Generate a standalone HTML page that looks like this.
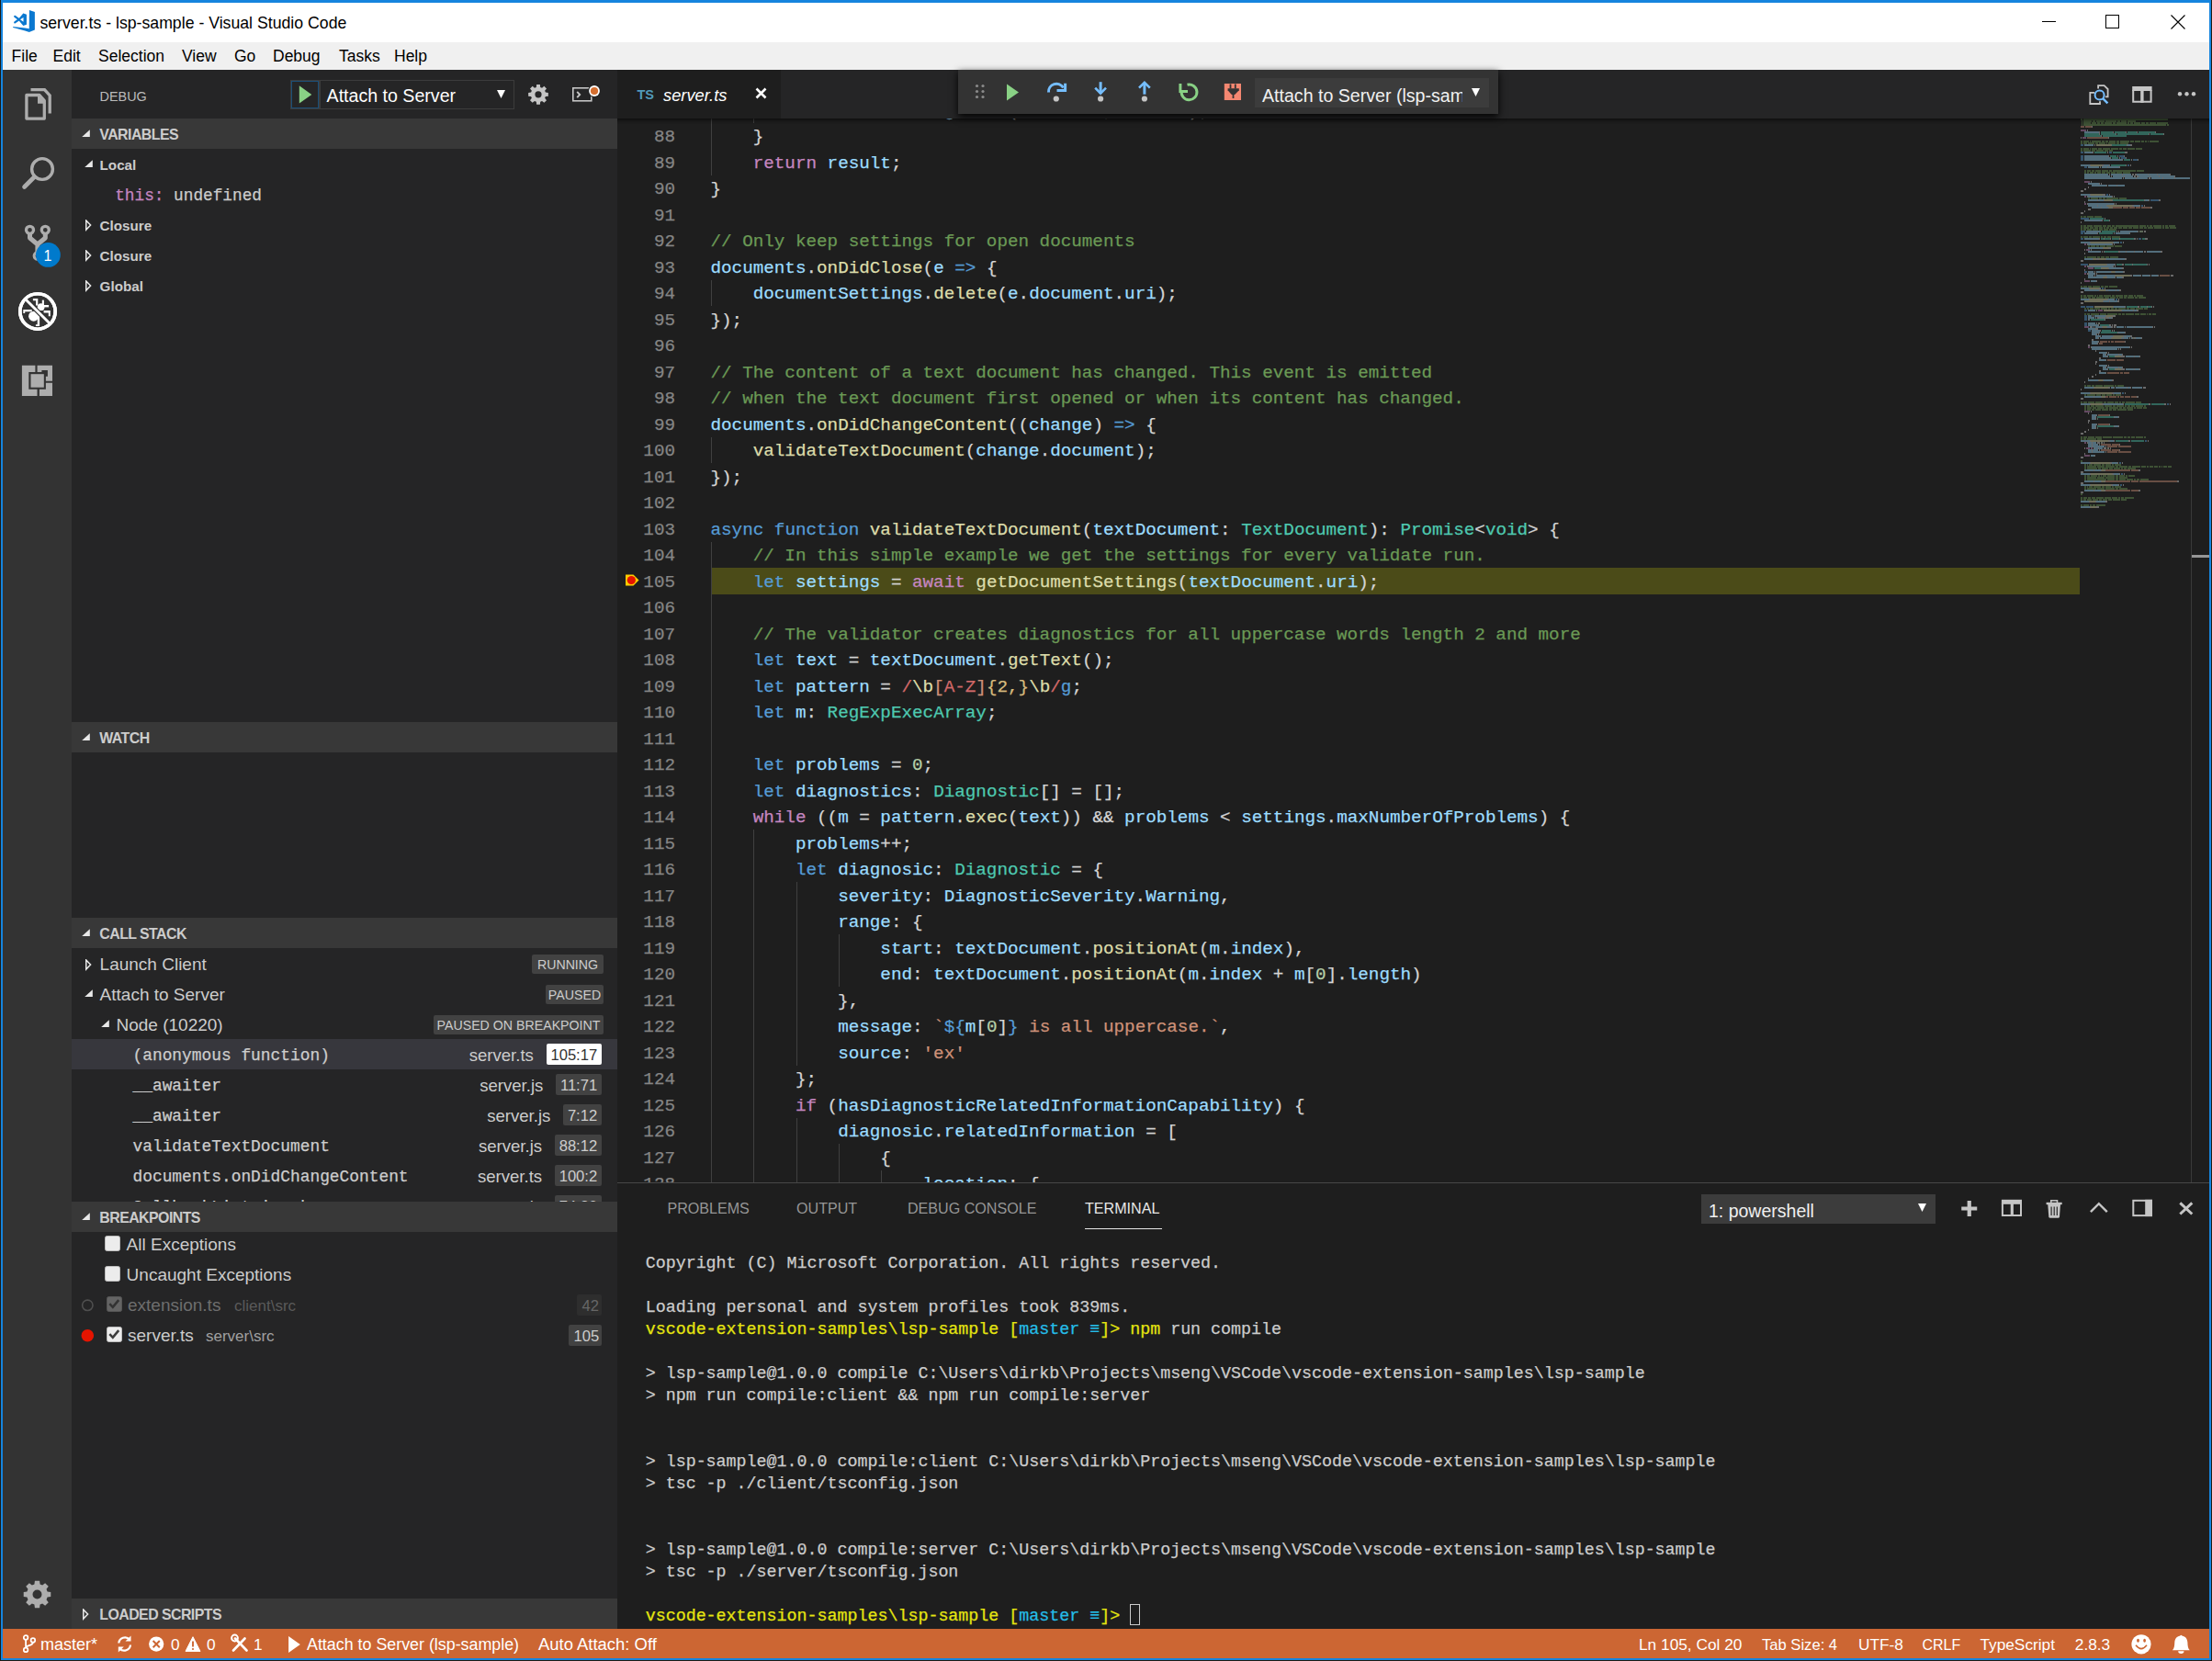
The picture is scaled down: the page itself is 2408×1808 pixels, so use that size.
<!DOCTYPE html><html><head><meta charset="utf-8"><style>
*{box-sizing:border-box}
html,body{margin:0;padding:0}
body{width:2408px;height:1808px;overflow:hidden;background:#1f1c15;position:relative;font-family:"Liberation Sans", sans-serif}
.t{position:absolute;white-space:pre}
.r{position:absolute}
.abs{position:absolute}
.clip{position:absolute;overflow:hidden}
.p{color:#d4d4d4}.kw{color:#569cd6}.ctl{color:#c586c0}.var{color:#9cdcfe}.fn{color:#dcdcaa}.ty{color:#4ec9b0}
.cm{color:#6a9955}.st{color:#ce9178}.num{color:#b5cea8}.re{color:#d16969}.rq{color:#d7ba7d}
.tw{color:#cccccc}.tyl{color:#e5e510}.tcy{color:#25bde8}
</style></head><body><div class="r" style="left:1.00px;top:0.00px;width:2406.00px;height:1807.00px;background:#1584de;"></div>
<div class="r" style="left:3.00px;top:3.00px;width:2402.00px;height:1802.00px;background:#1e1e1e;"></div>
<div class="r" style="left:3.00px;top:3.00px;width:2402.00px;height:43.00px;background:#ffffff;"></div>
<div class="t" style="left:43.40px;top:7.87px;line-height:35px;font-size:17.70px;color:#000;">server.ts - lsp-sample - Visual Studio Code</div>
<svg class="abs" style="left:0;top:0" width="45" height="45"><path fill="#0a78d0" d="M31.9 10.9 L37.9 13.05 V32.5 L31.7 34.9 Z"/><path fill="#0a78d0" d="M14.2 29 C20 29.4 26 30.4 31.9 31.2 V34.9 C26 33 19 30.9 14.2 29.9 Z"/><path d="M16.2 17.8 L21 21.3 M16.2 24.4 L21 21" stroke="#0a78d0" stroke-width="2.2" stroke-linecap="round"/><path fill="#0a78d0" fill-rule="evenodd" d="M25.3 14.4 L28.95 15.8 V26.8 L25.3 28 L19.6 21.3 Z M25.5 18.9 V23.8 L22 21.3 Z"/></svg>
<div class="r" style="left:2223.00px;top:23.00px;width:15.00px;height:1.00px;background:#000;"></div>
<div class="r" style="left:2292px;top:16px;width:15px;height:15px;border:1px solid #000"></div>
<svg class="abs" style="left:2363px;top:16px" width="16" height="16"><path d="M0.5 0.5L15.5 15.5M15.5 0.5L0.5 15.5" stroke="#000" stroke-width="1.1"/></svg>
<div class="r" style="left:3.00px;top:46.00px;width:2402.00px;height:30.00px;background:#f0f0f0;"></div>
<div class="t" style="left:12.60px;top:44.24px;line-height:35px;font-size:17.50px;color:#000;">File</div>
<div class="t" style="left:57.50px;top:44.24px;line-height:35px;font-size:17.50px;color:#000;">Edit</div>
<div class="t" style="left:107.00px;top:44.24px;line-height:35px;font-size:17.50px;color:#000;">Selection</div>
<div class="t" style="left:198.00px;top:44.24px;line-height:35px;font-size:17.50px;color:#000;">View</div>
<div class="t" style="left:255.00px;top:44.24px;line-height:35px;font-size:17.50px;color:#000;">Go</div>
<div class="t" style="left:297.00px;top:44.24px;line-height:35px;font-size:17.50px;color:#000;">Debug</div>
<div class="t" style="left:369.00px;top:44.24px;line-height:35px;font-size:17.50px;color:#000;">Tasks</div>
<div class="t" style="left:429.00px;top:44.24px;line-height:35px;font-size:17.50px;color:#000;">Help</div>
<div class="r" style="left:3.00px;top:76.00px;width:75.00px;height:1697.00px;background:#333333;"></div>
<svg class="abs" style="left:0;top:0" width="80" height="460"><path fill="none" stroke="#adadad" stroke-width="3.3" stroke-linejoin="round" d="M28.9 103.5 H43 L48.3 109.5 V129.1 H28.9 Z"/><path fill="#adadad" d="M41 103 V112.8 H50 Z"/><path fill="none" stroke="#adadad" stroke-width="3.3" d="M33.5 97.6 H48.5 L54.2 104 V123.5"/><circle cx="46" cy="184" r="11.4" fill="none" stroke="#adadad" stroke-width="3.4"/><path d="M37.5 192.5 L26.5 203.5" stroke="#adadad" stroke-width="4.6" stroke-linecap="round"/><circle cx="32.5" cy="250.3" r="4" fill="none" stroke="#adadad" stroke-width="3.3"/><circle cx="49.3" cy="250.3" r="4" fill="none" stroke="#adadad" stroke-width="3.3"/><circle cx="40.9" cy="278.4" r="3.8" fill="none" stroke="#adadad" stroke-width="3"/><path d="M32.5 254 V259 L40.9 266 V274.5 M49.3 254 V259 L40.9 266" fill="none" stroke="#adadad" stroke-width="5" stroke-linejoin="round"/><circle cx="52.4" cy="277.4" r="13.4" fill="#007acc"/><circle cx="41" cy="339" r="19.2" fill="none" stroke="#fff" stroke-width="3.6"/><g fill="#fff"><path d="M35.9 325 H41.3 V332.5 H39 V327.2 H35.9Z"/><rect x="45.8" y="326.6" width="2.1" height="6"/><circle cx="44.6" cy="334.2" r="3.9"/><rect x="47.5" y="332" width="5.6" height="2.4"/><path d="M47.6 338 H54.8 V344.2 H52.8 V340.4 H47.6Z"/><path d="M25.3 336.9 H34.7 V339.3 H27.2 V341 H25.3Z"/><circle cx="36.6" cy="344.2" r="5.5"/><path d="M40.7 343.5 H43.1 V355.1 H38.9 V353.2 H40.7Z"/></g><path d="M27.5 325.5 L54.3 352.3" stroke="#333" stroke-width="5.2"/><path d="M27.5 325.5 L54.3 352.3" stroke="#fff" stroke-width="2.9"/><circle cx="41" cy="339" r="19.2" fill="none" stroke="#fff" stroke-width="3.6"/><path fill="#adadad" d="M23.9 397.8H38.4V405H31.3V423.8H40.5V431H23.9Z"/><path fill="#adadad" d="M40.6 397.8H57V414.8H49.9V409.7H51.9V403H45.4V405H40.6Z"/><path fill="#adadad" d="M42.9 423.8H49.9V416.8H57V431H42.9Z"/><rect x="33.5" y="407.2" width="14.3" height="14.5" fill="#adadad"/></svg>
<div class="t" style="left:47.50px;top:262.96px;line-height:32px;font-size:16.00px;color:#fff;">1</div>
<svg class="abs" style="left:0;top:1700px" width="80" height="70"><path fill-rule="evenodd" fill="#adadad" d="M51.58 32.43 L55.28 32.92 L55.28 38.08 L51.58 38.57 L50.51 41.17 L52.77 44.13 L49.13 47.77 L46.17 45.51 L43.57 46.58 L43.08 50.28 L37.92 50.28 L37.43 46.58 L34.83 45.51 L31.87 47.77 L28.23 44.13 L30.49 41.17 L29.42 38.57 L25.72 38.08 L25.72 32.92 L29.42 32.43 L30.49 29.83 L28.23 26.87 L31.87 23.23 L34.83 25.49 L37.43 24.42 L37.92 20.72 L43.08 20.72 L43.57 24.42 L46.17 25.49 L49.13 23.23 L52.77 26.87 L50.51 29.83Z M35.50 35.50 a5.00 5.00 0 1 0 10.00 0 a5.00 5.00 0 1 0 -10.00 0Z"/></svg>
<div class="r" style="left:3.00px;top:1773.00px;width:2402.00px;height:32.00px;background:#cc6633;"></div>
<div class="t" style="left:44.00px;top:1771.96px;line-height:36px;font-size:18.00px;color:#fff;">master*</div>
<div class="t" style="left:186.00px;top:1772.71px;line-height:35px;font-size:17.30px;color:#fff;">0</div>
<div class="t" style="left:225.00px;top:1772.71px;line-height:35px;font-size:17.30px;color:#fff;">0</div>
<div class="t" style="left:276.00px;top:1772.71px;line-height:35px;font-size:17.30px;color:#fff;">1</div>
<div class="t" style="left:334.00px;top:1772.01px;line-height:36px;font-size:17.85px;color:#fff;">Attach to Server (lsp-sample)</div>
<div class="t" style="left:586.00px;top:1771.31px;line-height:37px;font-size:18.45px;color:#fff;">Auto Attach: Off</div>
<div class="t" style="left:1784.00px;top:1772.71px;line-height:35px;font-size:17.30px;color:#fff;">Ln 105, Col 20</div>
<div class="t" style="left:1918.00px;top:1773.95px;line-height:33px;font-size:16.60px;color:#fff;">Tab Size: 4</div>
<div class="t" style="left:2023.00px;top:1772.71px;line-height:35px;font-size:17.30px;color:#fff;">UTF-8</div>
<div class="t" style="left:2092.50px;top:1774.66px;line-height:32px;font-size:16.00px;color:#fff;">CRLF</div>
<div class="t" style="left:2155.40px;top:1772.71px;line-height:35px;font-size:17.30px;color:#fff;">TypeScript</div>
<div class="t" style="left:2258.80px;top:1772.71px;line-height:35px;font-size:17.30px;color:#fff;">2.8.3</div>
<svg class="abs" style="left:0;top:1773px" width="340" height="32"><circle cx="28.1" cy="9.5" r="2.3" fill="none" stroke="#fff" stroke-width="1.7"/><circle cx="28.1" cy="22.9" r="2.3" fill="none" stroke="#fff" stroke-width="1.7"/><circle cx="35.9" cy="12.4" r="2.3" fill="none" stroke="#fff" stroke-width="1.7"/><path d="M28.1 11.8 V20.6 M35.9 14.7 C35.9 18.5 28.8 17.5 28.3 20.3" fill="none" stroke="#fff" stroke-width="1.8"/><path d="M129.3 15.5 A6.8 6.8 0 0 1 141 11.5" fill="none" stroke="#fff" stroke-width="2.2"/><path d="M142.5 7.5 V13.5 H136.5Z" fill="#fff"/><path d="M142 17.5 A6.8 6.8 0 0 1 130.3 21.5" fill="none" stroke="#fff" stroke-width="2.2"/><path d="M128.8 25.5 V19.5 H134.8Z" fill="#fff"/><circle cx="170.2" cy="16.6" r="8.1" fill="#fff"/><path d="M166.6 13 L173.8 20.2 M173.8 13 L166.6 20.2" stroke="#cc6633" stroke-width="2"/><path d="M210 8.7 L218 24.4 H202Z" fill="#fff" stroke="#fff" stroke-width="1" stroke-linejoin="round"/><path d="M210 13.5 V19.5" stroke="#cc6633" stroke-width="1.9"/><circle cx="210" cy="22" r="1.1" fill="#cc6633"/><path d="M254 23.5 L266.5 10.5 M256 10.5 L268.5 23.5" stroke="#fff" stroke-width="2.6" stroke-linecap="round"/><circle cx="255.5" cy="10" r="3.4" fill="none" stroke="#fff" stroke-width="2"/><path d="M314.1 8 L326.8 17 L314.1 26Z" fill="#fff"/></svg>
<svg class="abs" style="left:2300px;top:1773px" width="100" height="32"><circle cx="31" cy="16.8" r="10.6" fill="#fff"/><ellipse cx="27.5" cy="12.8" rx="1.4" ry="2" fill="#cc6633"/><ellipse cx="34.6" cy="12.8" rx="1.4" ry="2" fill="#cc6633"/><path d="M25 17.8 Q31 25.5 37 17.8" fill="none" stroke="#cc6633" stroke-width="1.6"/><path d="M64.9 23.3 C66.8 21.5 67.2 18.5 67.3 14.8 C67.5 10.5 70 8.2 72.8 7.8 L74.35 6.8 L75.9 7.8 C78.7 8.2 81.2 10.5 81.4 14.8 C81.5 18.5 81.9 21.5 83.8 23.3Z" fill="#fff"/><path d="M71.2 24.3 H77.5 A3.15 2.6 0 0 1 71.2 24.3Z" fill="#fff"/></svg>
<div class="r" style="left:78.00px;top:76.00px;width:594.00px;height:1697.00px;background:#252526;"></div>
<div class="t" style="left:108.60px;top:91.01px;line-height:29px;font-size:14.40px;color:#bbbbbb;">DEBUG</div>
<div class="r" style="left:316px;top:87px;width:244px;height:32px;border:1.5px solid #3c3c3c"></div>
<div class="r" style="left:317px;top:88px;width:30px;height:30px;border:1px solid #1b4f78"></div>
<svg class="abs" style="left:320px;top:88px" width="30" height="30"><path d="M5.8 5.3 L19.3 14.9 L5.8 24.6Z" fill="#89d185"/></svg>
<div class="r" style="left:347.00px;top:88.00px;width:1.50px;height:30.00px;background:#3c3c3c;"></div>
<div class="t" style="left:355.60px;top:84.61px;line-height:39px;font-size:19.60px;color:#fff;">Attach to Server</div>
<svg class="abs" style="left:540px;top:97px" width="12" height="11"><path d="M1 1H10L5.5 10Z" fill="#fff"/></svg>
<svg class="abs" style="left:560px;top:80px" width="50" height="45"><path fill-rule="evenodd" fill="#c5c5c5" d="M33.90 20.61 L36.84 20.91 L36.84 24.69 L33.90 24.99 L33.13 26.84 L35.00 29.13 L32.33 31.80 L30.04 29.93 L28.19 30.70 L27.89 33.64 L24.11 33.64 L23.81 30.70 L21.96 29.93 L19.67 31.80 L17.00 29.13 L18.87 26.84 L18.10 24.99 L15.16 24.69 L15.16 20.91 L18.10 20.61 L18.87 18.76 L17.00 16.47 L19.67 13.80 L21.96 15.67 L23.81 14.90 L24.11 11.96 L27.89 11.96 L28.19 14.90 L30.04 15.67 L32.33 13.80 L35.00 16.47 L33.13 18.76Z M22.40 22.80 a3.60 3.60 0 1 0 7.20 0 a3.60 3.60 0 1 0 -7.20 0Z"/></svg>
<svg class="abs" style="left:620px;top:90px" width="40" height="25"><rect x="3.8" y="5.8" width="20" height="14" fill="none" stroke="#c5c5c5" stroke-width="1.6"/><path d="M8.2 9.8 L11.2 13 L8.2 16.2" fill="none" stroke="#c5c5c5" stroke-width="1.9"/><circle cx="27" cy="9" r="7" fill="#252526"/><circle cx="27" cy="9" r="5.9" fill="#fff"/><circle cx="27" cy="9" r="4.1" fill="#d46e2f"/></svg>
<div class="r" style="left:78.00px;top:129.00px;width:594.00px;height:33.00px;background:#383838;"></div>
<svg class="abs" style="left:89.2px;top:140.9px" width="10" height="9"><path d="M0.2 8 H8.8 V0.2Z" fill="#e8e8e8"/></svg>
<div class="t" style="left:108.30px;top:131.49px;line-height:32px;font-size:15.90px;color:#cccccc;font-weight:bold;letter-spacing:-0.55px">VARIABLES</div>
<svg class="abs" style="left:92.2px;top:174.0px" width="10" height="9"><path d="M0.2 8 H8.8 V0.2Z" fill="#e8e8e8"/></svg>
<div class="t" style="left:108.60px;top:164.53px;line-height:30px;font-size:15.20px;color:#cccccc;font-weight:bold">Local</div>
<div class="t" style="left:125.20px;top:194.77px;line-height:36px;font-size:17.75px;color:#cccccc;font-family:'Liberation Mono', monospace;-webkit-text-stroke:0.25px currentColor;"><span style="color:#c586c0">this:</span> undefined</div>
<svg class="abs" style="left:92.6px;top:238.9px" width="10" height="14"><path d="M0.75 0.9 L5.6 6 L0.75 11.1Z" fill="none" stroke="#e8e8e8" stroke-width="1.5" stroke-linejoin="miter"/></svg>
<div class="t" style="left:108.60px;top:230.53px;line-height:30px;font-size:15.20px;color:#cccccc;font-weight:bold">Closure</div>
<svg class="abs" style="left:92.6px;top:271.9px" width="10" height="14"><path d="M0.75 0.9 L5.6 6 L0.75 11.1Z" fill="none" stroke="#e8e8e8" stroke-width="1.5" stroke-linejoin="miter"/></svg>
<div class="t" style="left:108.60px;top:263.53px;line-height:30px;font-size:15.20px;color:#cccccc;font-weight:bold">Closure</div>
<svg class="abs" style="left:92.6px;top:304.9px" width="10" height="14"><path d="M0.75 0.9 L5.6 6 L0.75 11.1Z" fill="none" stroke="#e8e8e8" stroke-width="1.5" stroke-linejoin="miter"/></svg>
<div class="t" style="left:108.60px;top:296.53px;line-height:30px;font-size:15.20px;color:#cccccc;font-weight:bold">Global</div>
<div class="r" style="left:78.00px;top:786.00px;width:594.00px;height:33.00px;background:#383838;"></div>
<svg class="abs" style="left:89.2px;top:797.9px" width="10" height="9"><path d="M0.2 8 H8.8 V0.2Z" fill="#e8e8e8"/></svg>
<div class="t" style="left:108.30px;top:788.49px;line-height:32px;font-size:15.90px;color:#cccccc;font-weight:bold;letter-spacing:-0.55px">WATCH</div>
<div class="r" style="left:78.00px;top:999.00px;width:594.00px;height:33.00px;background:#383838;"></div>
<svg class="abs" style="left:89.2px;top:1010.9px" width="10" height="9"><path d="M0.2 8 H8.8 V0.2Z" fill="#e8e8e8"/></svg>
<div class="t" style="left:108.30px;top:1001.49px;line-height:32px;font-size:15.90px;color:#cccccc;font-weight:bold;letter-spacing:-0.55px">CALL STACK</div>
<svg class="abs" style="left:92.6px;top:1043.5px" width="10" height="14"><path d="M0.75 0.9 L5.6 6 L0.75 11.1Z" fill="none" stroke="#e8e8e8" stroke-width="1.5" stroke-linejoin="miter"/></svg>
<div class="t" style="left:108.60px;top:1030.62px;line-height:38px;font-size:19.00px;color:#cccccc;">Launch Client</div>
<div class="r" style="left:579.00px;top:1039.00px;width:78.00px;height:21.00px;background:#424242;border-radius:2px"></div><div class="t" style="left:618.00px;top:1036.48px;line-height:28px;font-size:14.20px;color:#cccccc;transform:translateX(-50%)">RUNNING</div>
<svg class="abs" style="left:92.2px;top:1076.5px" width="10" height="9"><path d="M0.2 8 H8.8 V0.2Z" fill="#e8e8e8"/></svg>
<div class="t" style="left:108.60px;top:1063.62px;line-height:38px;font-size:19.00px;color:#cccccc;">Attach to Server</div>
<div class="r" style="left:594.00px;top:1072.00px;width:63.00px;height:21.00px;background:#424242;border-radius:2px"></div><div class="t" style="left:625.50px;top:1069.48px;line-height:28px;font-size:14.20px;color:#cccccc;transform:translateX(-50%)">PAUSED</div>
<svg class="abs" style="left:110.2px;top:1109.5px" width="10" height="9"><path d="M0.2 8 H8.8 V0.2Z" fill="#e8e8e8"/></svg>
<div class="t" style="left:126.50px;top:1096.62px;line-height:38px;font-size:19.00px;color:#cccccc;">Node (10220)</div>
<div class="r" style="left:472.00px;top:1105.00px;width:185.00px;height:21.00px;background:#424242;border-radius:2px"></div><div class="t" style="left:564.50px;top:1102.48px;line-height:28px;font-size:14.20px;color:#cccccc;transform:translateX(-50%)">PAUSED ON BREAKPOINT</div>
<div class="clip" style="left:78px;top:1131px;width:594px;height:177px"><div class="r" style="left:0.00px;top:0.00px;width:594.00px;height:33.00px;background:#37373d;"></div><div class="t" style="left:66.50px;top:-0.26px;line-height:36px;font-size:17.87px;color:#cccccc;font-family:'Liberation Mono', monospace;-webkit-text-stroke:0.25px currentColor;">(anonymous function)</div><div class="r" style="left:516.93px;top:5.00px;width:59.77px;height:23.00px;background:#ffffff;border-radius:2px"></div><div class="t" style="left:521.43px;top:1.35px;line-height:33px;font-size:16.60px;color:#333333;">105:17</div><div class="t" style="left:432.65px;top:-1.44px;line-height:37px;font-size:18.60px;color:#cccccc;">server.ts</div><div class="t" style="left:66.50px;top:32.74px;line-height:36px;font-size:17.87px;color:#cccccc;font-family:'Liberation Mono', monospace;-webkit-text-stroke:0.25px currentColor;">__awaiter</div><div class="r" style="left:527.40px;top:38.00px;width:49.30px;height:23.00px;background:#424242;border-radius:2px"></div><div class="t" style="left:531.90px;top:34.35px;line-height:33px;font-size:16.60px;color:#cccccc;">11:71</div><div class="t" style="left:444.15px;top:31.56px;line-height:37px;font-size:18.60px;color:#cccccc;">server.js</div><div class="t" style="left:66.50px;top:65.74px;line-height:36px;font-size:17.87px;color:#cccccc;font-family:'Liberation Mono', monospace;-webkit-text-stroke:0.25px currentColor;">__awaiter</div><div class="r" style="left:535.39px;top:71.00px;width:41.31px;height:23.00px;background:#424242;border-radius:2px"></div><div class="t" style="left:539.89px;top:67.35px;line-height:33px;font-size:16.60px;color:#cccccc;">7:12</div><div class="t" style="left:452.15px;top:64.56px;line-height:37px;font-size:18.60px;color:#cccccc;">server.js</div><div class="t" style="left:66.50px;top:98.74px;line-height:36px;font-size:17.87px;color:#cccccc;font-family:'Liberation Mono', monospace;-webkit-text-stroke:0.25px currentColor;">validateTextDocument</div><div class="r" style="left:526.16px;top:104.00px;width:50.54px;height:23.00px;background:#424242;border-radius:2px"></div><div class="t" style="left:530.66px;top:100.35px;line-height:33px;font-size:16.60px;color:#cccccc;">88:12</div><div class="t" style="left:442.92px;top:97.56px;line-height:37px;font-size:18.60px;color:#cccccc;">server.js</div><div class="t" style="left:66.50px;top:131.74px;line-height:36px;font-size:17.87px;color:#cccccc;font-family:'Liberation Mono', monospace;-webkit-text-stroke:0.25px currentColor;">documents.onDidChangeContent</div><div class="r" style="left:526.16px;top:137.00px;width:50.54px;height:23.00px;background:#424242;border-radius:2px"></div><div class="t" style="left:530.66px;top:133.35px;line-height:33px;font-size:16.60px;color:#cccccc;">100:2</div><div class="t" style="left:441.88px;top:130.56px;line-height:37px;font-size:18.60px;color:#cccccc;">server.ts</div><div class="t" style="left:66.50px;top:164.74px;line-height:36px;font-size:17.87px;color:#cccccc;font-family:'Liberation Mono', monospace;-webkit-text-stroke:0.25px currentColor;">CallbackList.invoke</div><div class="r" style="left:526.16px;top:170.00px;width:50.54px;height:23.00px;background:#424242;border-radius:2px"></div><div class="t" style="left:530.66px;top:166.35px;line-height:33px;font-size:16.60px;color:#cccccc;">74:20</div><div class="t" style="left:438.77px;top:163.56px;line-height:37px;font-size:18.60px;color:#cccccc;">events.js</div></div>
<div class="r" style="left:78.00px;top:1308.00px;width:594.00px;height:33.00px;background:#383838;"></div>
<svg class="abs" style="left:89.2px;top:1319.9px" width="10" height="9"><path d="M0.2 8 H8.8 V0.2Z" fill="#e8e8e8"/></svg>
<div class="t" style="left:108.30px;top:1310.49px;line-height:32px;font-size:15.90px;color:#cccccc;font-weight:bold;letter-spacing:-0.55px">BREAKPOINTS</div>
<div class="r" style="left:114.0px;top:1345.0px;width:16.5px;height:16.5px;background:#ececec;border-radius:2.5px;border:1px solid #bdbdbd"></div>
<div class="t" style="left:137.60px;top:1336.02px;line-height:38px;font-size:19.00px;color:#cccccc;">All Exceptions</div>
<div class="r" style="left:114.0px;top:1378.0px;width:16.5px;height:16.5px;background:#ececec;border-radius:2.5px;border:1px solid #bdbdbd"></div>
<div class="t" style="left:137.60px;top:1369.02px;line-height:38px;font-size:19.00px;color:#cccccc;">Uncaught Exceptions</div>
<svg class="abs" style="left:86px;top:1413px" width="18" height="16"><circle cx="9.3" cy="7.8" r="5.7" fill="none" stroke="#4f4f4f" stroke-width="1.6"/></svg>
<div class="r" style="left:116.0px;top:1411.0px;width:16.5px;height:16.5px;background:#646464;border-radius:2.5px;border:1px solid #555555"></div><svg class="abs" style="left:116.0px;top:1411.0px" width="17" height="17"><path d="M3.3 8.2 L6.8 11.8 L13.2 4.2" fill="none" stroke="#333333" stroke-width="2.6"/></svg>
<div class="t" style="left:139.00px;top:1402.02px;line-height:38px;font-size:19.00px;color:#6e6e6e;">extension.ts</div>
<div class="t" style="left:255.00px;top:1404.71px;line-height:34px;font-size:17.00px;color:#5a5a5a;">client\src</div>
<div class="r" style="left:627.60px;top:1409.20px;width:27.00px;height:22.60px;background:#2e2e2e;border-radius:2px"></div>
<div class="t" style="left:633.50px;top:1404.55px;line-height:33px;font-size:16.60px;color:#666666;">42</div>
<svg class="abs" style="left:86px;top:1446px" width="18" height="16"><circle cx="9.3" cy="7.8" r="6.8" fill="#e51400"/></svg>
<div class="r" style="left:116.0px;top:1444.0px;width:16.5px;height:16.5px;background:#ececec;border-radius:2.5px;border:1px solid #bdbdbd"></div><svg class="abs" style="left:116.0px;top:1444.0px" width="17" height="17"><path d="M3.3 8.2 L6.8 11.8 L13.2 4.2" fill="none" stroke="#3c3c3c" stroke-width="2.6"/></svg>
<div class="t" style="left:139.00px;top:1434.92px;line-height:38px;font-size:19.00px;color:#cccccc;">server.ts</div>
<div class="t" style="left:224.00px;top:1437.61px;line-height:34px;font-size:17.00px;color:#a0a0a0;">server\src</div>
<div class="r" style="left:619.00px;top:1442.00px;width:35.70px;height:23.00px;background:#424242;border-radius:2px"></div>
<div class="t" style="left:624.50px;top:1438.25px;line-height:33px;font-size:16.60px;color:#cccccc;">105</div>
<div class="r" style="left:78.00px;top:1740.00px;width:594.00px;height:33.00px;background:#383838;"></div>
<svg class="abs" style="left:89.7px;top:1751.2px" width="10" height="14"><path d="M0.75 0.9 L5.6 6 L0.75 11.1Z" fill="none" stroke="#e8e8e8" stroke-width="1.5" stroke-linejoin="miter"/></svg>
<div class="t" style="left:108.30px;top:1742.49px;line-height:32px;font-size:15.90px;color:#cccccc;font-weight:bold;letter-spacing:-0.55px">LOADED SCRIPTS</div>
<div class="r" style="left:672.00px;top:76.00px;width:1733.00px;height:53.00px;background:#252526;"></div>
<div class="r" style="left:672.00px;top:76.00px;width:178.00px;height:53.00px;background:#1e1e1e;"></div>
<div class="t" style="left:693.50px;top:88.98px;line-height:29px;font-size:14.50px;color:#519aba;font-weight:bold">TS</div>
<div class="t" style="left:722.00px;top:84.66px;line-height:37px;font-size:18.30px;color:#ffffff;font-style:italic">server.ts</div>
<svg class="abs" style="left:820px;top:93px" width="18" height="18"><path d="M3.5 3.5 L13.5 13.5 M13.5 3.5 L3.5 13.5" stroke="#fff" stroke-width="2.6"/></svg>
<svg class="abs" style="left:2265px;top:85px" width="140" height="40"><path d="M19.1 11.6 V8.2 H25.6 L29.6 12 V20.4 H26.8" fill="none" stroke="#c5c5c5" stroke-width="1.8"/><path d="M15.2 15.8 H10.3 V28 H21 V25.2" fill="none" stroke="#c5c5c5" stroke-width="1.8"/><circle cx="20.6" cy="18.4" r="5" fill="none" stroke="#75beff" stroke-width="2"/><path d="M24.1 22.1 L29.4 27.4" stroke="#75beff" stroke-width="2.5"/><path d="M57.2 13 V25.8 H76.6 V13" fill="none" stroke="#c5c5c5" stroke-width="2"/><rect x="56.2" y="9" width="21.4" height="5" fill="#c5c5c5"/><rect x="65.2" y="13" width="3.4" height="13.8" fill="#c5c5c5"/><circle cx="108" cy="17.3" r="2.2" fill="#c5c5c5"/><circle cx="115.5" cy="17.3" r="2.2" fill="#c5c5c5"/><circle cx="123" cy="17.3" r="2.2" fill="#c5c5c5"/></svg>
<div class="clip" style="left:672px;top:129px;width:1733px;height:1158px"><div class="r" style="left:0.00px;top:0.00px;width:1733.00px;height:1158.00px;background:#1e1e1e;"></div>
<div class="r" style="left:102.10px;top:-23.75px;width:1.00px;height:28.50px;background:#404040;"></div>
<div class="r" style="left:148.31px;top:-23.75px;width:1.00px;height:28.50px;background:#404040;"></div>
<div class="t" style="left:39.90px;top:-27.43px;line-height:38px;font-size:19.25px;color:#858585;font-family:'Liberation Mono', monospace;-webkit-text-stroke:0.25px currentColor;">87</div>
<div class="t" style="left:101.50px;top:-27.43px;line-height:38px;font-size:19.25px;color:#d4d4d4;font-family:'Liberation Mono', monospace;-webkit-text-stroke:0.25px currentColor;"><span class="p">        </span><span class="var">documentSettings</span><span class="p">.</span><span class="fn">set</span><span class="p">(</span><span class="var">resource</span><span class="p">, </span><span class="var">result</span><span class="p">);</span></div>
<div class="r" style="left:102.10px;top:4.75px;width:1.00px;height:28.50px;background:#404040;"></div>
<div class="t" style="left:39.90px;top:1.07px;line-height:38px;font-size:19.25px;color:#858585;font-family:'Liberation Mono', monospace;-webkit-text-stroke:0.25px currentColor;">88</div>
<div class="t" style="left:101.50px;top:1.07px;line-height:38px;font-size:19.25px;color:#d4d4d4;font-family:'Liberation Mono', monospace;-webkit-text-stroke:0.25px currentColor;"><span class="p">    }</span></div>
<div class="r" style="left:102.10px;top:33.25px;width:1.00px;height:28.50px;background:#404040;"></div>
<div class="t" style="left:39.90px;top:29.57px;line-height:38px;font-size:19.25px;color:#858585;font-family:'Liberation Mono', monospace;-webkit-text-stroke:0.25px currentColor;">89</div>
<div class="t" style="left:101.50px;top:29.57px;line-height:38px;font-size:19.25px;color:#d4d4d4;font-family:'Liberation Mono', monospace;-webkit-text-stroke:0.25px currentColor;"><span class="p">    </span><span class="ctl">return</span><span class="p"> </span><span class="var">result</span><span class="p">;</span></div>
<div class="t" style="left:39.90px;top:58.07px;line-height:38px;font-size:19.25px;color:#858585;font-family:'Liberation Mono', monospace;-webkit-text-stroke:0.25px currentColor;">90</div>
<div class="t" style="left:101.50px;top:58.07px;line-height:38px;font-size:19.25px;color:#d4d4d4;font-family:'Liberation Mono', monospace;-webkit-text-stroke:0.25px currentColor;"><span class="p">}</span></div>
<div class="t" style="left:39.90px;top:86.57px;line-height:38px;font-size:19.25px;color:#858585;font-family:'Liberation Mono', monospace;-webkit-text-stroke:0.25px currentColor;">91</div>
<div class="t" style="left:101.50px;top:86.57px;line-height:38px;font-size:19.25px;color:#d4d4d4;font-family:'Liberation Mono', monospace;-webkit-text-stroke:0.25px currentColor;"><span class="p"></span></div>
<div class="t" style="left:39.90px;top:115.07px;line-height:38px;font-size:19.25px;color:#858585;font-family:'Liberation Mono', monospace;-webkit-text-stroke:0.25px currentColor;">92</div>
<div class="t" style="left:101.50px;top:115.07px;line-height:38px;font-size:19.25px;color:#d4d4d4;font-family:'Liberation Mono', monospace;-webkit-text-stroke:0.25px currentColor;"><span class="cm">// Only keep settings for open documents</span></div>
<div class="t" style="left:39.90px;top:143.57px;line-height:38px;font-size:19.25px;color:#858585;font-family:'Liberation Mono', monospace;-webkit-text-stroke:0.25px currentColor;">93</div>
<div class="t" style="left:101.50px;top:143.57px;line-height:38px;font-size:19.25px;color:#d4d4d4;font-family:'Liberation Mono', monospace;-webkit-text-stroke:0.25px currentColor;"><span class="var">documents</span><span class="p">.</span><span class="fn">onDidClose</span><span class="p">(</span><span class="var">e</span><span class="p"> </span><span class="kw">=&gt;</span><span class="p"> {</span></div>
<div class="r" style="left:102.10px;top:175.75px;width:1.00px;height:28.50px;background:#404040;"></div>
<div class="t" style="left:39.90px;top:172.07px;line-height:38px;font-size:19.25px;color:#858585;font-family:'Liberation Mono', monospace;-webkit-text-stroke:0.25px currentColor;">94</div>
<div class="t" style="left:101.50px;top:172.07px;line-height:38px;font-size:19.25px;color:#d4d4d4;font-family:'Liberation Mono', monospace;-webkit-text-stroke:0.25px currentColor;"><span class="p">    </span><span class="var">documentSettings</span><span class="p">.</span><span class="fn">delete</span><span class="p">(</span><span class="var">e</span><span class="p">.</span><span class="var">document</span><span class="p">.</span><span class="var">uri</span><span class="p">);</span></div>
<div class="t" style="left:39.90px;top:200.57px;line-height:38px;font-size:19.25px;color:#858585;font-family:'Liberation Mono', monospace;-webkit-text-stroke:0.25px currentColor;">95</div>
<div class="t" style="left:101.50px;top:200.57px;line-height:38px;font-size:19.25px;color:#d4d4d4;font-family:'Liberation Mono', monospace;-webkit-text-stroke:0.25px currentColor;"><span class="p">});</span></div>
<div class="t" style="left:39.90px;top:229.07px;line-height:38px;font-size:19.25px;color:#858585;font-family:'Liberation Mono', monospace;-webkit-text-stroke:0.25px currentColor;">96</div>
<div class="t" style="left:101.50px;top:229.07px;line-height:38px;font-size:19.25px;color:#d4d4d4;font-family:'Liberation Mono', monospace;-webkit-text-stroke:0.25px currentColor;"><span class="p"></span></div>
<div class="t" style="left:39.90px;top:257.57px;line-height:38px;font-size:19.25px;color:#858585;font-family:'Liberation Mono', monospace;-webkit-text-stroke:0.25px currentColor;">97</div>
<div class="t" style="left:101.50px;top:257.57px;line-height:38px;font-size:19.25px;color:#d4d4d4;font-family:'Liberation Mono', monospace;-webkit-text-stroke:0.25px currentColor;"><span class="cm">// The content of a text document has changed. This event is emitted</span></div>
<div class="t" style="left:39.90px;top:286.07px;line-height:38px;font-size:19.25px;color:#858585;font-family:'Liberation Mono', monospace;-webkit-text-stroke:0.25px currentColor;">98</div>
<div class="t" style="left:101.50px;top:286.07px;line-height:38px;font-size:19.25px;color:#d4d4d4;font-family:'Liberation Mono', monospace;-webkit-text-stroke:0.25px currentColor;"><span class="cm">// when the text document first opened or when its content has changed.</span></div>
<div class="t" style="left:39.90px;top:314.57px;line-height:38px;font-size:19.25px;color:#858585;font-family:'Liberation Mono', monospace;-webkit-text-stroke:0.25px currentColor;">99</div>
<div class="t" style="left:101.50px;top:314.57px;line-height:38px;font-size:19.25px;color:#d4d4d4;font-family:'Liberation Mono', monospace;-webkit-text-stroke:0.25px currentColor;"><span class="var">documents</span><span class="p">.</span><span class="fn">onDidChangeContent</span><span class="p">((</span><span class="var">change</span><span class="p">) </span><span class="kw">=&gt;</span><span class="p"> {</span></div>
<div class="r" style="left:102.10px;top:346.75px;width:1.00px;height:28.50px;background:#404040;"></div>
<div class="t" style="left:28.34px;top:343.07px;line-height:38px;font-size:19.25px;color:#858585;font-family:'Liberation Mono', monospace;-webkit-text-stroke:0.25px currentColor;">100</div>
<div class="t" style="left:101.50px;top:343.07px;line-height:38px;font-size:19.25px;color:#d4d4d4;font-family:'Liberation Mono', monospace;-webkit-text-stroke:0.25px currentColor;"><span class="p">    </span><span class="fn">validateTextDocument</span><span class="p">(</span><span class="var">change</span><span class="p">.</span><span class="var">document</span><span class="p">);</span></div>
<div class="t" style="left:28.34px;top:371.57px;line-height:38px;font-size:19.25px;color:#858585;font-family:'Liberation Mono', monospace;-webkit-text-stroke:0.25px currentColor;">101</div>
<div class="t" style="left:101.50px;top:371.57px;line-height:38px;font-size:19.25px;color:#d4d4d4;font-family:'Liberation Mono', monospace;-webkit-text-stroke:0.25px currentColor;"><span class="p">});</span></div>
<div class="t" style="left:28.34px;top:400.07px;line-height:38px;font-size:19.25px;color:#858585;font-family:'Liberation Mono', monospace;-webkit-text-stroke:0.25px currentColor;">102</div>
<div class="t" style="left:101.50px;top:400.07px;line-height:38px;font-size:19.25px;color:#d4d4d4;font-family:'Liberation Mono', monospace;-webkit-text-stroke:0.25px currentColor;"><span class="p"></span></div>
<div class="t" style="left:28.34px;top:428.57px;line-height:38px;font-size:19.25px;color:#858585;font-family:'Liberation Mono', monospace;-webkit-text-stroke:0.25px currentColor;">103</div>
<div class="t" style="left:101.50px;top:428.57px;line-height:38px;font-size:19.25px;color:#d4d4d4;font-family:'Liberation Mono', monospace;-webkit-text-stroke:0.25px currentColor;"><span class="kw">async</span><span class="p"> </span><span class="kw">function</span><span class="p"> </span><span class="fn">validateTextDocument</span><span class="p">(</span><span class="var">textDocument</span><span class="p">: </span><span class="ty">TextDocument</span><span class="p">): </span><span class="ty">Promise</span><span class="p">&lt;</span><span class="ty">void</span><span class="p">&gt; {</span></div>
<div class="r" style="left:102.10px;top:460.75px;width:1.00px;height:28.50px;background:#404040;"></div>
<div class="t" style="left:28.34px;top:457.07px;line-height:38px;font-size:19.25px;color:#858585;font-family:'Liberation Mono', monospace;-webkit-text-stroke:0.25px currentColor;">104</div>
<div class="t" style="left:101.50px;top:457.07px;line-height:38px;font-size:19.25px;color:#d4d4d4;font-family:'Liberation Mono', monospace;-webkit-text-stroke:0.25px currentColor;"><span class="p">    </span><span class="cm">// In this simple example we get the settings for every validate run.</span></div>
<div class="r" style="left:103.00px;top:489.25px;width:1489.00px;height:28.50px;background:#4b4b18;"></div>
<div class="r" style="left:102.10px;top:489.25px;width:1.00px;height:28.50px;background:#404040;"></div>
<div class="t" style="left:28.34px;top:485.57px;line-height:38px;font-size:19.25px;color:#858585;font-family:'Liberation Mono', monospace;-webkit-text-stroke:0.25px currentColor;">105</div>
<div class="t" style="left:101.50px;top:485.57px;line-height:38px;font-size:19.25px;color:#d4d4d4;font-family:'Liberation Mono', monospace;-webkit-text-stroke:0.25px currentColor;"><span class="p">    </span><span class="kw">let</span><span class="p"> </span><span class="var">settings</span><span class="p"> = </span><span class="ctl">await</span><span class="p"> </span><span class="fn">getDocumentSettings</span><span class="p">(</span><span class="var">textDocument</span><span class="p">.</span><span class="var">uri</span><span class="p">);</span></div>
<div class="r" style="left:102.10px;top:517.75px;width:1.00px;height:28.50px;background:#404040;"></div>
<div class="t" style="left:28.34px;top:514.07px;line-height:38px;font-size:19.25px;color:#858585;font-family:'Liberation Mono', monospace;-webkit-text-stroke:0.25px currentColor;">106</div>
<div class="t" style="left:101.50px;top:514.07px;line-height:38px;font-size:19.25px;color:#d4d4d4;font-family:'Liberation Mono', monospace;-webkit-text-stroke:0.25px currentColor;"><span class="p"></span></div>
<div class="r" style="left:102.10px;top:546.25px;width:1.00px;height:28.50px;background:#404040;"></div>
<div class="t" style="left:28.34px;top:542.57px;line-height:38px;font-size:19.25px;color:#858585;font-family:'Liberation Mono', monospace;-webkit-text-stroke:0.25px currentColor;">107</div>
<div class="t" style="left:101.50px;top:542.57px;line-height:38px;font-size:19.25px;color:#d4d4d4;font-family:'Liberation Mono', monospace;-webkit-text-stroke:0.25px currentColor;"><span class="p">    </span><span class="cm">// The validator creates diagnostics for all uppercase words length 2 and more</span></div>
<div class="r" style="left:102.10px;top:574.75px;width:1.00px;height:28.50px;background:#404040;"></div>
<div class="t" style="left:28.34px;top:571.07px;line-height:38px;font-size:19.25px;color:#858585;font-family:'Liberation Mono', monospace;-webkit-text-stroke:0.25px currentColor;">108</div>
<div class="t" style="left:101.50px;top:571.07px;line-height:38px;font-size:19.25px;color:#d4d4d4;font-family:'Liberation Mono', monospace;-webkit-text-stroke:0.25px currentColor;"><span class="p">    </span><span class="kw">let</span><span class="p"> </span><span class="var">text</span><span class="p"> = </span><span class="var">textDocument</span><span class="p">.</span><span class="fn">getText</span><span class="p">();</span></div>
<div class="r" style="left:102.10px;top:603.25px;width:1.00px;height:28.50px;background:#404040;"></div>
<div class="t" style="left:28.34px;top:599.57px;line-height:38px;font-size:19.25px;color:#858585;font-family:'Liberation Mono', monospace;-webkit-text-stroke:0.25px currentColor;">109</div>
<div class="t" style="left:101.50px;top:599.57px;line-height:38px;font-size:19.25px;color:#d4d4d4;font-family:'Liberation Mono', monospace;-webkit-text-stroke:0.25px currentColor;"><span class="p">    </span><span class="kw">let</span><span class="p"> </span><span class="var">pattern</span><span class="p"> = </span><span class="re">/</span><span class="fn">\b</span><span class="st">[</span><span class="re">A-Z</span><span class="st">]</span><span class="rq">{2,}</span><span class="fn">\b</span><span class="re">/</span><span class="kw">g</span><span class="p">;</span></div>
<div class="r" style="left:102.10px;top:631.75px;width:1.00px;height:28.50px;background:#404040;"></div>
<div class="t" style="left:28.34px;top:628.07px;line-height:38px;font-size:19.25px;color:#858585;font-family:'Liberation Mono', monospace;-webkit-text-stroke:0.25px currentColor;">110</div>
<div class="t" style="left:101.50px;top:628.07px;line-height:38px;font-size:19.25px;color:#d4d4d4;font-family:'Liberation Mono', monospace;-webkit-text-stroke:0.25px currentColor;"><span class="p">    </span><span class="kw">let</span><span class="p"> </span><span class="var">m</span><span class="p">: </span><span class="ty">RegExpExecArray</span><span class="p">;</span></div>
<div class="r" style="left:102.10px;top:660.25px;width:1.00px;height:28.50px;background:#404040;"></div>
<div class="t" style="left:28.34px;top:656.57px;line-height:38px;font-size:19.25px;color:#858585;font-family:'Liberation Mono', monospace;-webkit-text-stroke:0.25px currentColor;">111</div>
<div class="t" style="left:101.50px;top:656.57px;line-height:38px;font-size:19.25px;color:#d4d4d4;font-family:'Liberation Mono', monospace;-webkit-text-stroke:0.25px currentColor;"><span class="p"></span></div>
<div class="r" style="left:102.10px;top:688.75px;width:1.00px;height:28.50px;background:#404040;"></div>
<div class="t" style="left:28.34px;top:685.07px;line-height:38px;font-size:19.25px;color:#858585;font-family:'Liberation Mono', monospace;-webkit-text-stroke:0.25px currentColor;">112</div>
<div class="t" style="left:101.50px;top:685.07px;line-height:38px;font-size:19.25px;color:#d4d4d4;font-family:'Liberation Mono', monospace;-webkit-text-stroke:0.25px currentColor;"><span class="p">    </span><span class="kw">let</span><span class="p"> </span><span class="var">problems</span><span class="p"> = </span><span class="num">0</span><span class="p">;</span></div>
<div class="r" style="left:102.10px;top:717.25px;width:1.00px;height:28.50px;background:#404040;"></div>
<div class="t" style="left:28.34px;top:713.57px;line-height:38px;font-size:19.25px;color:#858585;font-family:'Liberation Mono', monospace;-webkit-text-stroke:0.25px currentColor;">113</div>
<div class="t" style="left:101.50px;top:713.57px;line-height:38px;font-size:19.25px;color:#d4d4d4;font-family:'Liberation Mono', monospace;-webkit-text-stroke:0.25px currentColor;"><span class="p">    </span><span class="kw">let</span><span class="p"> </span><span class="var">diagnostics</span><span class="p">: </span><span class="ty">Diagnostic</span><span class="p">[] = [];</span></div>
<div class="r" style="left:102.10px;top:745.75px;width:1.00px;height:28.50px;background:#404040;"></div>
<div class="t" style="left:28.34px;top:742.07px;line-height:38px;font-size:19.25px;color:#858585;font-family:'Liberation Mono', monospace;-webkit-text-stroke:0.25px currentColor;">114</div>
<div class="t" style="left:101.50px;top:742.07px;line-height:38px;font-size:19.25px;color:#d4d4d4;font-family:'Liberation Mono', monospace;-webkit-text-stroke:0.25px currentColor;"><span class="p">    </span><span class="ctl">while</span><span class="p"> ((</span><span class="var">m</span><span class="p"> = </span><span class="var">pattern</span><span class="p">.</span><span class="fn">exec</span><span class="p">(</span><span class="var">text</span><span class="p">)) &amp;&amp; </span><span class="var">problems</span><span class="p"> &lt; </span><span class="var">settings</span><span class="p">.</span><span class="var">maxNumberOfProblems</span><span class="p">) {</span></div>
<div class="r" style="left:102.10px;top:774.25px;width:1.00px;height:28.50px;background:#404040;"></div>
<div class="r" style="left:148.31px;top:774.25px;width:1.00px;height:28.50px;background:#404040;"></div>
<div class="t" style="left:28.34px;top:770.57px;line-height:38px;font-size:19.25px;color:#858585;font-family:'Liberation Mono', monospace;-webkit-text-stroke:0.25px currentColor;">115</div>
<div class="t" style="left:101.50px;top:770.57px;line-height:38px;font-size:19.25px;color:#d4d4d4;font-family:'Liberation Mono', monospace;-webkit-text-stroke:0.25px currentColor;"><span class="p">        </span><span class="var">problems</span><span class="p">++;</span></div>
<div class="r" style="left:102.10px;top:802.75px;width:1.00px;height:28.50px;background:#404040;"></div>
<div class="r" style="left:148.31px;top:802.75px;width:1.00px;height:28.50px;background:#404040;"></div>
<div class="t" style="left:28.34px;top:799.07px;line-height:38px;font-size:19.25px;color:#858585;font-family:'Liberation Mono', monospace;-webkit-text-stroke:0.25px currentColor;">116</div>
<div class="t" style="left:101.50px;top:799.07px;line-height:38px;font-size:19.25px;color:#d4d4d4;font-family:'Liberation Mono', monospace;-webkit-text-stroke:0.25px currentColor;"><span class="p">        </span><span class="kw">let</span><span class="p"> </span><span class="var">diagnosic</span><span class="p">: </span><span class="ty">Diagnostic</span><span class="p"> = {</span></div>
<div class="r" style="left:102.10px;top:831.25px;width:1.00px;height:28.50px;background:#404040;"></div>
<div class="r" style="left:148.31px;top:831.25px;width:1.00px;height:28.50px;background:#404040;"></div>
<div class="r" style="left:194.52px;top:831.25px;width:1.00px;height:28.50px;background:#404040;"></div>
<div class="t" style="left:28.34px;top:827.57px;line-height:38px;font-size:19.25px;color:#858585;font-family:'Liberation Mono', monospace;-webkit-text-stroke:0.25px currentColor;">117</div>
<div class="t" style="left:101.50px;top:827.57px;line-height:38px;font-size:19.25px;color:#d4d4d4;font-family:'Liberation Mono', monospace;-webkit-text-stroke:0.25px currentColor;"><span class="p">            </span><span class="var">severity</span><span class="p">: </span><span class="var">DiagnosticSeverity</span><span class="p">.</span><span class="var">Warning</span><span class="p">,</span></div>
<div class="r" style="left:102.10px;top:859.75px;width:1.00px;height:28.50px;background:#404040;"></div>
<div class="r" style="left:148.31px;top:859.75px;width:1.00px;height:28.50px;background:#404040;"></div>
<div class="r" style="left:194.52px;top:859.75px;width:1.00px;height:28.50px;background:#404040;"></div>
<div class="t" style="left:28.34px;top:856.07px;line-height:38px;font-size:19.25px;color:#858585;font-family:'Liberation Mono', monospace;-webkit-text-stroke:0.25px currentColor;">118</div>
<div class="t" style="left:101.50px;top:856.07px;line-height:38px;font-size:19.25px;color:#d4d4d4;font-family:'Liberation Mono', monospace;-webkit-text-stroke:0.25px currentColor;"><span class="p">            </span><span class="var">range</span><span class="p">: {</span></div>
<div class="r" style="left:102.10px;top:888.25px;width:1.00px;height:28.50px;background:#404040;"></div>
<div class="r" style="left:148.31px;top:888.25px;width:1.00px;height:28.50px;background:#404040;"></div>
<div class="r" style="left:194.52px;top:888.25px;width:1.00px;height:28.50px;background:#404040;"></div>
<div class="r" style="left:240.72px;top:888.25px;width:1.00px;height:28.50px;background:#404040;"></div>
<div class="t" style="left:28.34px;top:884.57px;line-height:38px;font-size:19.25px;color:#858585;font-family:'Liberation Mono', monospace;-webkit-text-stroke:0.25px currentColor;">119</div>
<div class="t" style="left:101.50px;top:884.57px;line-height:38px;font-size:19.25px;color:#d4d4d4;font-family:'Liberation Mono', monospace;-webkit-text-stroke:0.25px currentColor;"><span class="p">                </span><span class="var">start</span><span class="p">: </span><span class="var">textDocument</span><span class="p">.</span><span class="fn">positionAt</span><span class="p">(</span><span class="var">m</span><span class="p">.</span><span class="var">index</span><span class="p">),</span></div>
<div class="r" style="left:102.10px;top:916.75px;width:1.00px;height:28.50px;background:#404040;"></div>
<div class="r" style="left:148.31px;top:916.75px;width:1.00px;height:28.50px;background:#404040;"></div>
<div class="r" style="left:194.52px;top:916.75px;width:1.00px;height:28.50px;background:#404040;"></div>
<div class="r" style="left:240.72px;top:916.75px;width:1.00px;height:28.50px;background:#404040;"></div>
<div class="t" style="left:28.34px;top:913.07px;line-height:38px;font-size:19.25px;color:#858585;font-family:'Liberation Mono', monospace;-webkit-text-stroke:0.25px currentColor;">120</div>
<div class="t" style="left:101.50px;top:913.07px;line-height:38px;font-size:19.25px;color:#d4d4d4;font-family:'Liberation Mono', monospace;-webkit-text-stroke:0.25px currentColor;"><span class="p">                </span><span class="var">end</span><span class="p">: </span><span class="var">textDocument</span><span class="p">.</span><span class="fn">positionAt</span><span class="p">(</span><span class="var">m</span><span class="p">.</span><span class="var">index</span><span class="p"> + </span><span class="var">m</span><span class="p">[</span><span class="num">0</span><span class="p">].</span><span class="var">length</span><span class="p">)</span></div>
<div class="r" style="left:102.10px;top:945.25px;width:1.00px;height:28.50px;background:#404040;"></div>
<div class="r" style="left:148.31px;top:945.25px;width:1.00px;height:28.50px;background:#404040;"></div>
<div class="r" style="left:194.52px;top:945.25px;width:1.00px;height:28.50px;background:#404040;"></div>
<div class="t" style="left:28.34px;top:941.57px;line-height:38px;font-size:19.25px;color:#858585;font-family:'Liberation Mono', monospace;-webkit-text-stroke:0.25px currentColor;">121</div>
<div class="t" style="left:101.50px;top:941.57px;line-height:38px;font-size:19.25px;color:#d4d4d4;font-family:'Liberation Mono', monospace;-webkit-text-stroke:0.25px currentColor;"><span class="p">            },</span></div>
<div class="r" style="left:102.10px;top:973.75px;width:1.00px;height:28.50px;background:#404040;"></div>
<div class="r" style="left:148.31px;top:973.75px;width:1.00px;height:28.50px;background:#404040;"></div>
<div class="r" style="left:194.52px;top:973.75px;width:1.00px;height:28.50px;background:#404040;"></div>
<div class="t" style="left:28.34px;top:970.07px;line-height:38px;font-size:19.25px;color:#858585;font-family:'Liberation Mono', monospace;-webkit-text-stroke:0.25px currentColor;">122</div>
<div class="t" style="left:101.50px;top:970.07px;line-height:38px;font-size:19.25px;color:#d4d4d4;font-family:'Liberation Mono', monospace;-webkit-text-stroke:0.25px currentColor;"><span class="p">            </span><span class="var">message</span><span class="p">: </span><span class="st">`</span><span class="kw">${</span><span class="var">m</span><span class="p">[</span><span class="num">0</span><span class="p">]</span><span class="kw">}</span><span class="st"> is all uppercase.`</span><span class="p">,</span></div>
<div class="r" style="left:102.10px;top:1002.25px;width:1.00px;height:28.50px;background:#404040;"></div>
<div class="r" style="left:148.31px;top:1002.25px;width:1.00px;height:28.50px;background:#404040;"></div>
<div class="r" style="left:194.52px;top:1002.25px;width:1.00px;height:28.50px;background:#404040;"></div>
<div class="t" style="left:28.34px;top:998.57px;line-height:38px;font-size:19.25px;color:#858585;font-family:'Liberation Mono', monospace;-webkit-text-stroke:0.25px currentColor;">123</div>
<div class="t" style="left:101.50px;top:998.57px;line-height:38px;font-size:19.25px;color:#d4d4d4;font-family:'Liberation Mono', monospace;-webkit-text-stroke:0.25px currentColor;"><span class="p">            </span><span class="var">source</span><span class="p">: </span><span class="st">&#x27;ex&#x27;</span></div>
<div class="r" style="left:102.10px;top:1030.75px;width:1.00px;height:28.50px;background:#404040;"></div>
<div class="r" style="left:148.31px;top:1030.75px;width:1.00px;height:28.50px;background:#404040;"></div>
<div class="t" style="left:28.34px;top:1027.07px;line-height:38px;font-size:19.25px;color:#858585;font-family:'Liberation Mono', monospace;-webkit-text-stroke:0.25px currentColor;">124</div>
<div class="t" style="left:101.50px;top:1027.07px;line-height:38px;font-size:19.25px;color:#d4d4d4;font-family:'Liberation Mono', monospace;-webkit-text-stroke:0.25px currentColor;"><span class="p">        };</span></div>
<div class="r" style="left:102.10px;top:1059.25px;width:1.00px;height:28.50px;background:#404040;"></div>
<div class="r" style="left:148.31px;top:1059.25px;width:1.00px;height:28.50px;background:#404040;"></div>
<div class="t" style="left:28.34px;top:1055.57px;line-height:38px;font-size:19.25px;color:#858585;font-family:'Liberation Mono', monospace;-webkit-text-stroke:0.25px currentColor;">125</div>
<div class="t" style="left:101.50px;top:1055.57px;line-height:38px;font-size:19.25px;color:#d4d4d4;font-family:'Liberation Mono', monospace;-webkit-text-stroke:0.25px currentColor;"><span class="p">        </span><span class="ctl">if</span><span class="p"> (</span><span class="var">hasDiagnosticRelatedInformationCapability</span><span class="p">) {</span></div>
<div class="r" style="left:102.10px;top:1087.75px;width:1.00px;height:28.50px;background:#404040;"></div>
<div class="r" style="left:148.31px;top:1087.75px;width:1.00px;height:28.50px;background:#404040;"></div>
<div class="r" style="left:194.52px;top:1087.75px;width:1.00px;height:28.50px;background:#404040;"></div>
<div class="t" style="left:28.34px;top:1084.07px;line-height:38px;font-size:19.25px;color:#858585;font-family:'Liberation Mono', monospace;-webkit-text-stroke:0.25px currentColor;">126</div>
<div class="t" style="left:101.50px;top:1084.07px;line-height:38px;font-size:19.25px;color:#d4d4d4;font-family:'Liberation Mono', monospace;-webkit-text-stroke:0.25px currentColor;"><span class="p">            </span><span class="var">diagnosic</span><span class="p">.</span><span class="var">relatedInformation</span><span class="p"> = [</span></div>
<div class="r" style="left:102.10px;top:1116.25px;width:1.00px;height:28.50px;background:#404040;"></div>
<div class="r" style="left:148.31px;top:1116.25px;width:1.00px;height:28.50px;background:#404040;"></div>
<div class="r" style="left:194.52px;top:1116.25px;width:1.00px;height:28.50px;background:#404040;"></div>
<div class="r" style="left:240.72px;top:1116.25px;width:1.00px;height:28.50px;background:#404040;"></div>
<div class="t" style="left:28.34px;top:1112.57px;line-height:38px;font-size:19.25px;color:#858585;font-family:'Liberation Mono', monospace;-webkit-text-stroke:0.25px currentColor;">127</div>
<div class="t" style="left:101.50px;top:1112.57px;line-height:38px;font-size:19.25px;color:#d4d4d4;font-family:'Liberation Mono', monospace;-webkit-text-stroke:0.25px currentColor;"><span class="p">                {</span></div>
<div class="r" style="left:102.10px;top:1144.75px;width:1.00px;height:28.50px;background:#404040;"></div>
<div class="r" style="left:148.31px;top:1144.75px;width:1.00px;height:28.50px;background:#404040;"></div>
<div class="r" style="left:194.52px;top:1144.75px;width:1.00px;height:28.50px;background:#404040;"></div>
<div class="r" style="left:240.72px;top:1144.75px;width:1.00px;height:28.50px;background:#404040;"></div>
<div class="r" style="left:286.93px;top:1144.75px;width:1.00px;height:28.50px;background:#404040;"></div>
<div class="t" style="left:28.34px;top:1141.07px;line-height:38px;font-size:19.25px;color:#858585;font-family:'Liberation Mono', monospace;-webkit-text-stroke:0.25px currentColor;">128</div>
<div class="t" style="left:101.50px;top:1141.07px;line-height:38px;font-size:19.25px;color:#d4d4d4;font-family:'Liberation Mono', monospace;-webkit-text-stroke:0.25px currentColor;"><span class="p">                    </span><span class="var">location</span><span class="p">: {</span></div>
<svg class="abs" style="left:7.5px;top:494.3px" width="18" height="18"><path d="M1 2.5 H9.5 L15.5 8.5 L9.5 14.5 H1Z" fill="#ffcc00"/><circle cx="7.3" cy="8.5" r="4.6" fill="#e51400"/></svg>
<svg class="abs" style="left:1593px;top:0px;opacity:0.42" width="119" height="1158"><path fill="rgb(106,153,85)" d="M0 0h2v2h-2zM3 0h92v2h-92zM1 2h1v2h-1zM3 2h9v2h-9zM13 2h3v2h-3zM17 2h9v2h-9zM27 2h12v2h-12zM40 2h3v2h-3zM44 2h6v2h-6zM51 2h9v2h-9zM1 4h1v2h-1zM3 4h8v2h-8zM12 4h5v2h-5zM18 4h3v2h-3zM22 4h3v2h-3zM26 4h8v2h-8zM35 4h3v2h-3zM39 4h11v2h-11zM51 4h2v2h-2zM54 4h3v2h-3zM58 4h7v2h-7zM66 4h4v2h-4zM71 4h3v2h-3zM75 4h7v2h-7zM83 4h12v2h-12zM1 6h1v2h-1zM3 6h90v2h-90zM94 6h2v2h-2zM0 24h2v2h-2zM3 24h6v2h-6zM10 24h1v2h-1zM12 24h10v2h-10zM23 24h3v2h-3zM27 24h3v2h-3zM31 24h7v2h-7zM39 24h3v2h-3zM43 24h10v2h-10zM54 24h4v2h-4zM59 24h6v2h-6zM66 24h3v2h-3zM70 24h2v2h-2zM73 24h1v2h-1zM75 24h10v2h-10zM0 26h2v2h-2zM3 26h4v2h-4zM8 26h7v2h-7zM16 26h3v2h-3zM20 26h7v2h-7zM28 26h1v2h-1zM30 26h8v2h-8zM39 26h3v2h-3zM43 26h9v2h-9zM0 32h2v2h-2zM3 32h6v2h-6zM10 32h1v2h-1zM12 32h6v2h-6zM19 32h4v2h-4zM24 32h8v2h-8zM33 32h8v2h-8zM42 32h3v2h-3zM46 32h4v2h-4zM51 32h8v2h-8zM60 32h7v2h-7zM0 34h2v2h-2zM3 34h8v2h-8zM12 34h4v2h-4zM17 34h8v2h-8zM26 34h4v2h-4zM31 34h4v2h-4zM4 56h2v2h-2zM7 56h4v2h-4zM12 56h3v2h-3zM16 56h6v2h-6zM23 56h7v2h-7zM31 56h3v2h-3zM35 56h25v2h-25zM61 56h8v2h-8zM4 58h2v2h-2zM7 58h2v2h-2zM10 58h4v2h-4zM15 58h2v2h-2zM18 58h4v2h-4zM23 58h4v2h-4zM28 58h4v2h-4zM33 58h5v2h-5zM39 58h6v2h-6zM46 58h8v2h-8zM8 86h2v2h-2zM11 86h8v2h-8zM20 86h3v2h-3zM24 86h3v2h-3zM28 86h13v2h-13zM42 86h8v2h-8zM0 106h2v2h-2zM3 106h3v2h-3zM7 106h7v2h-7zM15 106h8v2h-8zM0 116h2v2h-2zM3 116h3v2h-3zM7 116h6v2h-6zM14 116h9v2h-9zM24 116h4v2h-4zM29 116h4v2h-4zM34 116h3v2h-3zM38 116h25v2h-25zM64 116h7v2h-7zM72 116h2v2h-2zM75 116h3v2h-3zM79 116h9v2h-9zM89 116h2v2h-2zM92 116h3v2h-3zM96 116h7v2h-7zM0 118h2v2h-2zM3 118h6v2h-6zM10 118h4v2h-4zM15 118h4v2h-4zM20 118h4v2h-4zM25 118h2v2h-2zM28 118h3v2h-3zM32 118h3v2h-3zM36 118h4v2h-4zM41 118h4v2h-4zM46 118h5v2h-5zM52 118h4v2h-4zM57 118h6v2h-6zM64 118h4v2h-4zM69 118h3v2h-3zM73 118h6v2h-6zM80 118h8v2h-8zM89 118h2v2h-2zM92 118h4v2h-4zM97 118h7v2h-7zM0 120h2v2h-2zM3 120h3v2h-3zM7 120h5v2h-5zM13 120h6v2h-6zM20 120h4v2h-4zM25 120h5v2h-5zM31 120h8v2h-8zM0 128h2v2h-2zM3 128h5v2h-5zM9 128h3v2h-3zM13 128h8v2h-8zM22 128h2v2h-2zM25 128h3v2h-3zM29 128h4v2h-4zM34 128h9v2h-9zM8 138h2v2h-2zM11 138h5v2h-5zM17 138h3v2h-3zM21 138h6v2h-6zM28 138h8v2h-8zM37 138h8v2h-8zM4 150h2v2h-2zM7 150h10v2h-10zM18 150h3v2h-3zM22 150h4v2h-4zM27 150h4v2h-4zM32 150h9v2h-9zM0 182h2v2h-2zM3 182h4v2h-4zM8 182h4v2h-4zM13 182h8v2h-8zM22 182h3v2h-3zM26 182h4v2h-4zM31 182h9v2h-9zM0 192h2v2h-2zM3 192h3v2h-3zM7 192h7v2h-7zM15 192h2v2h-2zM18 192h1v2h-1zM20 192h4v2h-4zM25 192h8v2h-8zM34 192h3v2h-3zM38 192h8v2h-8zM47 192h4v2h-4zM52 192h5v2h-5zM58 192h2v2h-2zM61 192h7v2h-7zM0 194h2v2h-2zM3 194h4v2h-4zM8 194h3v2h-3zM12 194h4v2h-4zM17 194h8v2h-8zM26 194h5v2h-5zM32 194h6v2h-6zM39 194h2v2h-2zM42 194h4v2h-4zM47 194h3v2h-3zM51 194h7v2h-7zM59 194h3v2h-3zM63 194h8v2h-8zM4 206h2v2h-2zM7 206h2v2h-2zM10 206h4v2h-4zM15 206h6v2h-6zM22 206h7v2h-7zM30 206h2v2h-2zM33 206h3v2h-3zM37 206h3v2h-3zM41 206h8v2h-8zM50 206h3v2h-3zM54 206h5v2h-5zM60 206h8v2h-8zM69 206h4v2h-4zM4 212h2v2h-2zM7 212h3v2h-3zM11 212h9v2h-9zM21 212h7v2h-7zM29 212h11v2h-11zM41 212h3v2h-3zM45 212h3v2h-3zM49 212h9v2h-9zM59 212h5v2h-5zM65 212h6v2h-6zM72 212h1v2h-1zM74 212h3v2h-3zM78 212h4v2h-4zM4 290h2v2h-2zM7 290h4v2h-4zM12 290h3v2h-3zM16 290h8v2h-8zM25 290h11v2h-11zM37 290h2v2h-2zM40 290h7v2h-7zM4 300h2v2h-2zM7 300h9v2h-9zM17 300h5v2h-5zM23 300h4v2h-4zM28 300h6v2h-6zM35 300h2v2h-2zM38 300h6v2h-6zM0 308h2v2h-2zM3 308h4v2h-4zM8 308h7v2h-7zM16 308h8v2h-8zM25 308h3v2h-3zM29 308h7v2h-7zM37 308h4v2h-4zM42 308h2v2h-2zM45 308h3v2h-3zM49 308h10v2h-10zM60 308h6v2h-6zM4 312h2v2h-2zM7 312h3v2h-3zM11 312h4v2h-4zM16 312h9v2h-9zM26 312h8v2h-8zM35 312h3v2h-3zM39 312h8v2h-8zM48 312h2v2h-2zM51 312h3v2h-3zM55 312h4v2h-4zM60 312h8v2h-8zM69 312h2v2h-2zM4 314h2v2h-2zM7 314h5v2h-5zM13 314h4v2h-4zM18 314h8v2h-8zM27 314h3v2h-3zM31 314h10v2h-10zM42 314h3v2h-3zM46 314h3v2h-3zM50 314h7v2h-7zM58 314h2v2h-2zM61 314h6v2h-6zM68 314h4v2h-4zM4 316h2v2h-2zM7 316h4v2h-4zM12 316h3v2h-3zM16 316h6v2h-6zM23 316h7v2h-7zM31 316h3v2h-3zM35 316h4v2h-4zM40 316h10v2h-10zM51 316h6v2h-6zM0 346h2v2h-2zM3 346h4v2h-4zM8 346h7v2h-7zM16 346h7v2h-7zM24 346h10v2h-10zM35 346h11v2h-11zM47 346h3v2h-3zM51 346h3v2h-3zM55 346h4v2h-4zM60 346h8v2h-8zM69 346h2v2h-2zM0 348h2v2h-2zM3 348h3v2h-3zM7 348h10v2h-10zM18 348h5v2h-5zM0 372h2v2h-2zM4 376h2v2h-2zM7 376h1v2h-1zM9 376h4v2h-4zM14 376h8v2h-8zM23 376h3v2h-3zM27 376h6v2h-6zM34 376h2v2h-2zM37 376h7v2h-7zM4 378h2v2h-2zM7 378h10v2h-10zM18 378h8v2h-8zM27 378h10v2h-10zM38 378h3v2h-3zM42 378h9v2h-9zM52 378h3v2h-3zM56 378h9v2h-9zM66 378h5v2h-5zM72 378h2v2h-2zM75 378h4v2h-4zM80 378h4v2h-4zM85 378h2v2h-2zM88 378h1v2h-1zM90 378h4v2h-4zM95 378h4v2h-4zM4 380h2v2h-2zM7 380h11v2h-11zM19 380h3v2h-3zM23 380h7v2h-7zM31 380h4v2h-4zM36 380h7v2h-7zM44 380h2v2h-2zM47 380h3v2h-3zM51 380h9v2h-9zM4 388h2v2h-2zM7 388h3v2h-3zM11 388h7v2h-7zM19 388h2v2h-2zM22 388h1v2h-1zM24 388h4v2h-4zM29 388h8v2h-8zM38 388h3v2h-3zM42 388h6v2h-6zM49 388h2v2h-2zM52 388h7v2h-7zM4 390h2v2h-2zM7 390h10v2h-10zM18 390h8v2h-8zM27 390h10v2h-10zM38 390h3v2h-3zM42 390h9v2h-9zM4 392h2v2h-2zM7 392h21v2h-21zM29 392h8v2h-8zM38 392h3v2h-3zM42 392h7v2h-7zM50 392h7v2h-7zM58 392h2v2h-2zM61 392h3v2h-3zM65 392h9v2h-9zM4 400h2v2h-2zM7 400h1v2h-1zM9 400h4v2h-4zM14 400h8v2h-8zM23 400h3v2h-3zM27 400h6v2h-6zM34 400h2v2h-2zM37 400h7v2h-7zM4 402h2v2h-2zM7 402h10v2h-10zM18 402h8v2h-8zM27 402h10v2h-10zM38 402h3v2h-3zM42 402h9v2h-9zM0 408h2v2h-2zM0 412h2v2h-2zM3 412h4v2h-4zM8 412h3v2h-3zM12 412h4v2h-4zM17 412h8v2h-8zM26 412h7v2h-7zM34 412h6v2h-6zM41 412h2v2h-2zM44 412h3v2h-3zM48 412h10v2h-10zM0 414h2v2h-2zM3 414h3v2h-3zM7 414h5v2h-5zM13 414h6v2h-6zM20 414h3v2h-3zM24 414h5v2h-5zM30 414h4v2h-4zM35 414h8v2h-8zM44 414h6v2h-6zM0 420h2v2h-2zM3 420h6v2h-6zM10 420h2v2h-2zM13 420h3v2h-3zM17 420h10v2h-10z"/><path fill="rgb(206,145,120)" d="M0 8h4v2h-4zM5 8h7v2h-7zM7 20h23v2h-23zM35 96h10v2h-10zM46 96h6v2h-6zM53 96h6v2h-6zM60 96h5v2h-5zM66 96h10v2h-10zM86 170h11v2h-11zM21 242h8v2h-8zM30 242h2v2h-2zM33 242h3v2h-3zM37 242h11v2h-11zM20 244h4v2h-4zM29 262h9v2h-9zM39 262h8v2h-8zM29 276h13v2h-13zM43 276h3v2h-3zM47 276h6v2h-6zM27 302h3v2h-3zM31 302h8v2h-8zM40 302h2v2h-2zM43 302h4v2h-4zM48 302h6v2h-6zM55 302h6v2h-6zM19 322h12v2h-12zM19 332h12v2h-12zM22 354h11v2h-11zM34 354h8v2h-8zM29 356h11v2h-11zM41 356h14v2h-14zM22 360h11v2h-11zM34 360h8v2h-8zM29 362h11v2h-11zM41 362h14v2h-14zM27 382h27v2h-27zM55 382h8v2h-8zM27 394h27v2h-27zM55 394h8v2h-8zM64 394h41v2h-41zM27 404h27v2h-27zM55 404h8v2h-8z"/><path fill="rgb(212,212,212)" d="M12 8h1v2h-1zM7 12h1v2h-1zM20 14h1v2h-1zM35 14h1v2h-1zM49 14h1v2h-1zM61 14h1v2h-1zM81 14h1v2h-1zM20 16h1v2h-1zM38 16h1v2h-1zM74 16h1v2h-1zM90 16h1v2h-1zM22 18h1v2h-1zM0 20h1v2h-1zM30 20h1v2h-1zM15 28h1v2h-1zM33 28h1v2h-1zM50 28h1v2h-1zM54 28h2v2h-2zM13 36h1v2h-1zM29 36h1v2h-1zM48 36h3v2h-3zM30 40h1v2h-1zM40 40h1v2h-1zM47 40h1v2h-1zM32 42h1v2h-1zM42 42h1v2h-1zM49 42h1v2h-1zM45 44h1v2h-1zM55 44h1v2h-1zM62 44h1v2h-1zM10 50h1v2h-1zM23 50h2v2h-2zM31 50h1v2h-1zM49 50h1v2h-1zM54 50h1v2h-1zM21 52h1v2h-1zM29 52h1v2h-1zM42 52h1v2h-1zM31 60h1v2h-1zM45 60h1v2h-1zM56 60h2v2h-2zM59 60h2v2h-2zM73 60h1v2h-1zM83 60h1v2h-1zM97 60h1v2h-1zM33 62h1v2h-1zM47 62h1v2h-1zM58 62h2v2h-2zM61 62h2v2h-2zM75 62h1v2h-1zM85 62h1v2h-1zM102 62h1v2h-1zM46 64h1v2h-1zM60 64h1v2h-1zM74 64h2v2h-2zM89 64h1v2h-1zM102 64h1v2h-1zM11 68h1v2h-1zM20 70h1v2h-1zM22 70h1v2h-1zM28 72h1v2h-1zM39 72h1v2h-1zM8 74h1v2h-1zM4 76h2v2h-2zM0 78h3v2h-3zM10 82h1v2h-1zM24 82h3v2h-3zM31 82h1v2h-1zM7 84h1v2h-1zM34 84h1v2h-1zM36 84h1v2h-1zM18 88h1v2h-1zM25 88h1v2h-1zM34 88h1v2h-1zM69 88h1v2h-1zM74 88h1v2h-1zM85 88h2v2h-2zM4 90h1v2h-1zM7 92h1v2h-1zM36 92h1v2h-1zM38 92h1v2h-1zM18 94h1v2h-1zM28 94h1v2h-1zM56 94h2v2h-2zM64 94h1v2h-1zM69 94h1v2h-1zM22 96h1v2h-1zM30 96h1v2h-1zM34 96h1v2h-1zM76 96h2v2h-2zM8 98h3v2h-3zM4 100h1v2h-1zM0 102h3v2h-3zM26 108h1v2h-1zM23 110h1v2h-1zM31 110h1v2h-1zM0 112h1v2h-1zM21 122h1v2h-1zM39 122h1v2h-1zM41 122h1v2h-1zM62 122h1v2h-1zM69 122h2v2h-2zM18 124h1v2h-1zM36 124h1v2h-1zM53 124h1v2h-1zM20 130h1v2h-1zM25 130h1v2h-1zM32 130h1v2h-1zM42 130h1v2h-1zM58 130h2v2h-2zM61 130h1v2h-1zM70 130h3v2h-3zM10 134h1v2h-1zM35 134h1v2h-1zM46 134h1v2h-1zM7 136h1v2h-1zM34 136h1v2h-1zM36 136h1v2h-1zM24 140h1v2h-1zM30 140h3v2h-3zM4 142h1v2h-1zM11 142h1v2h-1zM23 144h1v2h-1zM25 144h1v2h-1zM41 144h2v2h-2zM49 144h1v2h-1zM58 144h1v2h-1zM69 144h2v2h-2zM87 144h2v2h-2zM4 146h1v2h-1zM13 152h1v2h-1zM17 152h3v2h-3zM27 152h1v2h-1zM48 152h2v2h-2zM0 154h3v2h-3zM28 158h1v2h-1zM37 158h1v2h-1zM45 158h2v2h-2zM56 158h1v2h-1zM72 158h1v2h-1zM74 158h1v2h-1zM7 160h2v2h-2zM35 160h1v2h-1zM37 160h1v2h-1zM22 162h1v2h-1zM30 162h1v2h-1zM45 162h2v2h-2zM4 164h1v2h-1zM15 166h1v2h-1zM33 166h1v2h-1zM37 166h1v2h-1zM46 166h2v2h-2zM7 168h2v2h-2zM15 168h1v2h-1zM17 168h1v2h-1zM15 170h1v2h-1zM27 170h1v2h-1zM37 170h1v2h-1zM54 170h2v2h-2zM65 170h1v2h-1zM75 170h1v2h-1zM84 170h1v2h-1zM98 170h3v2h-3zM24 172h1v2h-1zM28 172h1v2h-1zM37 172h1v2h-1zM45 172h2v2h-2zM4 174h1v2h-1zM17 176h1v2h-1zM0 178h1v2h-1zM9 184h1v2h-1zM20 184h1v2h-1zM26 184h1v2h-1zM20 186h1v2h-1zM27 186h1v2h-1zM29 186h1v2h-1zM38 186h1v2h-1zM42 186h2v2h-2zM0 188h3v2h-3zM9 196h1v2h-1zM28 196h2v2h-2zM36 196h1v2h-1zM41 196h1v2h-1zM24 198h1v2h-1zM31 198h1v2h-1zM40 198h2v2h-2zM0 200h3v2h-3zM35 204h1v2h-1zM48 204h1v2h-1zM62 204h2v2h-2zM72 204h1v2h-1zM77 204h1v2h-1zM79 204h1v2h-1zM17 208h1v2h-1zM44 208h1v2h-1zM57 208h1v2h-1zM61 208h2v2h-2zM13 214h1v2h-1zM27 214h1v2h-1zM35 214h3v2h-3zM16 216h1v2h-1zM18 216h2v2h-2zM21 216h1v2h-1zM23 216h1v2h-1zM25 216h2v2h-2zM28 216h3v2h-3zM32 216h1v2h-1zM34 216h1v2h-1zM9 218h1v2h-1zM26 218h1v2h-1zM17 222h1v2h-1zM20 222h1v2h-1zM19 224h1v2h-1zM31 224h2v2h-2zM34 224h1v2h-1zM36 224h3v2h-3zM10 226h2v2h-2zM14 226h1v2h-1zM23 226h1v2h-1zM28 226h1v2h-1zM33 226h2v2h-2zM36 226h2v2h-2zM48 226h1v2h-1zM58 226h1v2h-1zM78 226h1v2h-1zM80 226h1v2h-1zM16 228h3v2h-3zM21 230h1v2h-1zM34 230h1v2h-1zM36 230h1v2h-1zM20 232h1v2h-1zM40 232h1v2h-1zM48 232h1v2h-1zM17 234h1v2h-1zM19 234h1v2h-1zM21 236h1v2h-1zM35 236h1v2h-1zM46 236h1v2h-1zM48 236h1v2h-1zM54 236h2v2h-2zM19 238h1v2h-1zM33 238h1v2h-1zM44 238h1v2h-1zM46 238h1v2h-1zM53 238h1v2h-1zM56 238h1v2h-1zM58 238h2v2h-2zM66 238h1v2h-1zM12 240h2v2h-2zM19 242h1v2h-1zM48 242h1v2h-1zM18 244h1v2h-1zM8 246h2v2h-2zM11 248h1v2h-1zM53 248h1v2h-1zM55 248h1v2h-1zM21 250h1v2h-1zM41 250h1v2h-1zM43 250h1v2h-1zM16 252h1v2h-1zM28 254h1v2h-1zM30 254h1v2h-1zM27 256h1v2h-1zM41 256h1v2h-1zM45 256h1v2h-1zM29 258h1v2h-1zM37 258h1v2h-1zM44 258h4v2h-4zM58 258h1v2h-1zM64 258h1v2h-1zM20 260h2v2h-2zM27 262h1v2h-1zM16 264h2v2h-2zM16 266h1v2h-1zM28 268h1v2h-1zM30 268h1v2h-1zM27 270h1v2h-1zM41 270h1v2h-1zM45 270h1v2h-1zM29 272h1v2h-1zM37 272h1v2h-1zM44 272h4v2h-4zM58 272h1v2h-1zM64 272h1v2h-1zM20 274h2v2h-2zM27 276h1v2h-1zM16 278h1v2h-1zM12 280h2v2h-2zM8 282h1v2h-1zM19 284h1v2h-1zM24 284h1v2h-1zM34 284h2v2h-2zM4 286h1v2h-1zM14 292h1v2h-1zM30 292h2v2h-2zM36 292h1v2h-1zM50 292h1v2h-1zM54 292h1v2h-1zM68 292h3v2h-3zM0 294h1v2h-1zM10 298h1v2h-1zM34 298h2v2h-2zM43 298h1v2h-1zM48 298h1v2h-1zM14 302h1v2h-1zM22 302h1v2h-1zM26 302h1v2h-1zM61 302h2v2h-2zM0 304h3v2h-3zM10 310h1v2h-1zM23 310h2v2h-2zM46 310h1v2h-1zM74 310h2v2h-2zM91 310h2v2h-2zM97 310h1v2h-1zM11 318h1v2h-1zM8 320h1v2h-1zM17 322h1v2h-1zM31 322h1v2h-1zM16 324h1v2h-1zM36 324h1v2h-1zM41 324h1v2h-1zM16 326h1v2h-1zM8 328h2v2h-2zM8 330h1v2h-1zM17 332h1v2h-1zM31 332h1v2h-1zM16 334h1v2h-1zM36 334h1v2h-1zM41 334h1v2h-1zM16 336h1v2h-1zM8 338h1v2h-1zM4 340h2v2h-2zM0 342h3v2h-3zM10 350h1v2h-1zM30 350h2v2h-2zM36 350h1v2h-1zM52 350h2v2h-2zM73 350h1v2h-1zM7 352h1v2h-1zM12 352h1v2h-1zM18 352h3v2h-3zM23 352h1v2h-1zM25 352h1v2h-1zM12 354h1v2h-1zM20 354h1v2h-1zM42 354h1v2h-1zM12 356h1v2h-1zM27 356h1v2h-1zM4 358h1v2h-1zM14 358h1v2h-1zM19 358h1v2h-1zM25 358h3v2h-3zM30 358h1v2h-1zM32 358h1v2h-1zM12 360h1v2h-1zM20 360h1v2h-1zM42 360h1v2h-1zM12 362h1v2h-1zM27 362h1v2h-1zM4 364h1v2h-1zM15 366h1v2h-1zM0 368h3v2h-3zM10 374h1v2h-1zM32 374h2v2h-2zM40 374h1v2h-1zM45 374h1v2h-1zM14 382h1v2h-1zM22 382h1v2h-1zM26 382h1v2h-1zM63 382h2v2h-2zM0 384h3v2h-3zM10 386h1v2h-1zM34 386h2v2h-2zM42 386h1v2h-1zM47 386h1v2h-1zM14 394h1v2h-1zM22 394h1v2h-1zM26 394h1v2h-1zM105 394h2v2h-2zM0 396h3v2h-3zM10 398h1v2h-1zM33 398h2v2h-2zM41 398h1v2h-1zM46 398h1v2h-1zM14 404h1v2h-1zM22 404h1v2h-1zM26 404h1v2h-1zM63 404h2v2h-2zM0 406h3v2h-3zM9 416h1v2h-1zM16 416h1v2h-1zM27 416h2v2h-2zM10 422h1v2h-1zM17 422h3v2h-3z"/><path fill="rgb(197,134,192)" d="M0 12h6v2h-6zM2 20h4v2h-4zM4 68h6v2h-6zM4 84h2v2h-2zM4 92h2v2h-2zM4 136h2v2h-2zM6 142h4v2h-4zM4 160h2v2h-2zM8 162h6v2h-6zM4 168h2v2h-2zM4 176h6v2h-6zM19 208h5v2h-5zM4 226h5v2h-5zM8 248h2v2h-2zM4 318h6v2h-6zM4 352h2v2h-2zM6 358h4v2h-4zM11 358h2v2h-2zM4 366h6v2h-6z"/><path fill="rgb(156,220,254)" d="M4 14h16v2h-16zM4 28h10v2h-10zM51 28h3v2h-3zM4 36h9v2h-9zM4 40h26v2h-26zM4 42h28v2h-28zM4 44h41v2h-41zM0 50h10v2h-10zM25 50h6v2h-6zM8 52h12v2h-12zM23 52h6v2h-6zM30 52h12v2h-12zM4 60h26v2h-26zM33 60h12v2h-12zM46 60h9v2h-9zM61 60h12v2h-12zM74 60h9v2h-9zM84 60h13v2h-13zM4 62h28v2h-28zM35 62h12v2h-12zM48 62h9v2h-9zM63 62h12v2h-12zM76 62h9v2h-9zM86 62h16v2h-16zM4 64h41v2h-41zM48 64h12v2h-12zM61 64h12v2h-12zM77 64h12v2h-12zM90 64h12v2h-12zM103 64h16v2h-16zM8 70h12v2h-12zM12 72h16v2h-16zM30 72h9v2h-9zM40 72h8v2h-8zM0 82h10v2h-10zM8 84h26v2h-26zM8 88h10v2h-10zM19 88h6v2h-6zM70 88h4v2h-4zM8 92h28v2h-28zM8 94h10v2h-10zM19 94h9v2h-9zM58 94h6v2h-6zM12 96h10v2h-10zM23 96h7v2h-7zM4 110h19v2h-19zM6 122h15v2h-15zM43 122h19v2h-19zM4 124h14v2h-14zM38 124h15v2h-15zM4 130h16v2h-16zM0 134h10v2h-10zM36 134h6v2h-6zM8 136h26v2h-26zM8 140h16v2h-16zM8 144h14v2h-14zM43 144h6v2h-6zM50 144h8v2h-8zM59 144h9v2h-9zM72 144h15v2h-15zM4 152h9v2h-9zM28 152h20v2h-20zM29 158h8v2h-8zM9 160h26v2h-26zM31 162h14v2h-14zM8 166h6v2h-6zM17 166h16v2h-16zM38 166h8v2h-8zM9 168h6v2h-6zM8 170h6v2h-6zM17 170h10v2h-10zM28 170h9v2h-9zM57 170h8v2h-8zM67 170h8v2h-8zM77 170h7v2h-7zM8 172h16v2h-16zM29 172h8v2h-8zM39 172h6v2h-6zM11 176h6v2h-6zM0 184h9v2h-9zM21 184h1v2h-1zM4 186h16v2h-16zM28 186h1v2h-1zM30 186h8v2h-8zM39 186h3v2h-3zM0 196h9v2h-9zM30 196h6v2h-6zM25 198h6v2h-6zM32 198h8v2h-8zM36 204h12v2h-12zM8 208h8v2h-8zM45 208h12v2h-12zM58 208h3v2h-3zM8 214h4v2h-4zM15 214h12v2h-12zM8 216h7v2h-7zM20 216h1v2h-1zM22 216h1v2h-1zM24 216h1v2h-1zM31 216h1v2h-1zM33 216h1v2h-1zM8 218h1v2h-1zM8 222h8v2h-8zM8 224h11v2h-11zM12 226h1v2h-1zM16 226h7v2h-7zM29 226h4v2h-4zM39 226h8v2h-8zM50 226h8v2h-8zM59 226h19v2h-19zM8 228h8v2h-8zM12 230h9v2h-9zM12 232h8v2h-8zM41 232h7v2h-7zM12 234h5v2h-5zM16 236h5v2h-5zM23 236h12v2h-12zM47 236h1v2h-1zM49 236h5v2h-5zM16 238h3v2h-3zM21 238h12v2h-12zM45 238h1v2h-1zM47 238h5v2h-5zM55 238h1v2h-1zM60 238h6v2h-6zM12 242h7v2h-7zM12 244h6v2h-6zM12 248h41v2h-41zM12 250h9v2h-9zM22 250h18v2h-18zM20 254h8v2h-8zM24 256h3v2h-3zM29 256h12v2h-12zM42 256h3v2h-3zM24 258h5v2h-5zM49 258h9v2h-9zM59 258h5v2h-5zM20 262h7v2h-7zM20 268h8v2h-8zM24 270h3v2h-3zM29 270h12v2h-12zM42 270h3v2h-3zM24 272h5v2h-5zM49 272h9v2h-9zM59 272h5v2h-5zM20 276h7v2h-7zM8 284h11v2h-11zM25 284h9v2h-9zM4 292h10v2h-10zM33 292h3v2h-3zM38 292h12v2h-12zM51 292h3v2h-3zM56 292h11v2h-11zM0 298h10v2h-10zM36 298h7v2h-7zM4 302h10v2h-10zM15 302h7v2h-7zM0 310h10v2h-10zM25 310h21v2h-21zM12 322h5v2h-5zM12 324h4v2h-4zM37 324h4v2h-4zM12 326h4v2h-4zM12 332h5v2h-5zM12 334h4v2h-4zM37 334h4v2h-4zM12 336h4v2h-4zM0 350h10v2h-10zM32 350h4v2h-4zM8 352h4v2h-4zM13 352h4v2h-4zM8 354h4v2h-4zM13 354h6v2h-6zM8 356h4v2h-4zM13 356h13v2h-13zM15 358h4v2h-4zM20 358h4v2h-4zM8 360h4v2h-4zM13 360h6v2h-6zM8 362h4v2h-4zM13 362h13v2h-13zM11 366h4v2h-4zM0 374h10v2h-10zM34 374h6v2h-6zM4 382h10v2h-10zM15 382h7v2h-7zM0 386h10v2h-10zM36 386h6v2h-6zM4 394h10v2h-10zM15 394h7v2h-7zM0 398h10v2h-10zM35 398h6v2h-6zM4 404h10v2h-10zM15 404h7v2h-7zM0 416h9v2h-9zM17 416h10v2h-10zM0 422h10v2h-10z"/><path fill="rgb(78,201,176)" d="M22 14h13v2h-13zM37 14h12v2h-12zM51 14h10v2h-10zM63 14h18v2h-18zM4 16h16v2h-16zM22 16h16v2h-16zM40 16h34v2h-34zM76 16h14v2h-14zM4 18h18v2h-18zM24 18h26v2h-26zM34 28h16v2h-16zM15 36h13v2h-13zM35 36h13v2h-13zM32 40h7v2h-7zM34 42h7v2h-7zM47 44h7v2h-7zM33 50h16v2h-16zM35 88h34v2h-34zM10 108h15v2h-15zM25 110h6v2h-6zM23 122h15v2h-15zM20 124h15v2h-15zM22 130h3v2h-3zM26 130h6v2h-6zM34 130h8v2h-8zM43 130h15v2h-15zM67 130h3v2h-3zM26 144h15v2h-15zM39 158h6v2h-6zM48 158h8v2h-8zM57 158h15v2h-15zM15 162h7v2h-7zM50 204h12v2h-12zM65 204h7v2h-7zM73 204h4v2h-4zM11 218h15v2h-15zM21 224h10v2h-10zM23 230h10v2h-10zM22 232h18v2h-18zM31 258h6v2h-6zM31 272h6v2h-6zM48 310h26v2h-26zM77 310h14v2h-14zM18 324h18v2h-18zM18 334h18v2h-18zM38 350h14v2h-14zM55 350h14v2h-14z"/><path fill="rgb(86,156,214)" d="M0 28h3v2h-3zM0 36h3v2h-3zM31 36h3v2h-3zM0 40h3v2h-3zM42 40h5v2h-5zM0 42h3v2h-3zM44 42h5v2h-5zM0 44h3v2h-3zM57 44h5v2h-5zM51 50h2v2h-2zM4 52h3v2h-3zM28 82h2v2h-2zM76 88h9v2h-9zM66 94h2v2h-2zM0 108h9v2h-9zM0 122h5v2h-5zM0 124h3v2h-3zM0 130h3v2h-3zM63 130h3v2h-3zM43 134h2v2h-2zM0 158h8v2h-8zM4 166h3v2h-3zM23 184h2v2h-2zM38 196h2v2h-2zM0 204h5v2h-5zM6 204h8v2h-8zM4 208h3v2h-3zM4 214h3v2h-3zM4 216h3v2h-3zM4 218h3v2h-3zM4 222h3v2h-3zM4 224h3v2h-3zM8 230h3v2h-3zM45 298h2v2h-2zM94 310h2v2h-2zM70 350h2v2h-2zM42 374h2v2h-2zM44 386h2v2h-2zM43 398h2v2h-2z"/><path fill="rgb(220,220,170)" d="M17 28h16v2h-16zM11 50h12v2h-12zM11 82h13v2h-13zM26 88h8v2h-8zM29 94h27v2h-27zM31 96h3v2h-3zM11 134h24v2h-24zM25 140h5v2h-5zM14 152h3v2h-3zM20 152h7v2h-7zM9 158h19v2h-19zM23 162h7v2h-7zM34 166h3v2h-3zM38 170h16v2h-16zM25 172h3v2h-3zM10 184h10v2h-10zM21 186h6v2h-6zM10 196h18v2h-18zM4 198h20v2h-20zM15 204h20v2h-20zM25 208h19v2h-19zM28 214h7v2h-7zM24 226h4v2h-4zM36 236h10v2h-10zM34 238h10v2h-10zM38 258h6v2h-6zM38 272h6v2h-6zM20 284h4v2h-4zM15 292h15v2h-15zM11 298h23v2h-23zM23 302h3v2h-3zM11 310h12v2h-12zM11 350h19v2h-19zM11 374h21v2h-21zM23 382h3v2h-3zM11 386h23v2h-23zM23 394h3v2h-3zM11 398h22v2h-22zM23 404h3v2h-3zM10 416h6v2h-6zM11 422h6v2h-6z"/><path fill="rgb(181,206,168)" d="M64 122h4v2h-4zM27 216h1v2h-1zM19 222h1v2h-1zM57 238h1v2h-1zM18 326h1v2h-1zM18 336h1v2h-1zM22 352h1v2h-1zM29 358h1v2h-1z"/></svg>
<div class="r" style="left:1713.00px;top:0.00px;width:1.00px;height:1158.00px;background:#3a3a3a;"></div>
<div class="r" style="left:1714.00px;top:475.30px;width:19.00px;height:3.00px;background:#969696;"></div>
<div class="r" style="left:0.00px;top:0.00px;width:1733.00px;height:6.00px;background:transparent;box-shadow:inset 0 6px 6px -6px #000"></div></div>
<div class="r" style="left:1043px;top:76px;width:588px;height:47.5px;background:#333333;box-shadow:0 3px 8px #000"></div>
<svg class="abs" style="left:1043px;top:76px" width="588" height="48"><g fill="#8a8a8a"><circle cx="20.5" cy="17.5" r="1.6"/><circle cx="27" cy="17.5" r="1.6"/><circle cx="20.5" cy="23.5" r="1.6"/><circle cx="27" cy="23.5" r="1.6"/><circle cx="20.5" cy="29.5" r="1.6"/><circle cx="27" cy="29.5" r="1.6"/></g><path d="M53 15.5 L66 24.5 L53 33.5Z" fill="#89d185"/><path d="M98.5 24.5 A8.6 8.6 0 0 1 114.5 19.5" fill="none" stroke="#75beff" stroke-width="3"/><path d="M107.5 22.6 H116.6 V14.8" fill="none" stroke="#75beff" stroke-width="3"/><circle cx="106.8" cy="31.5" r="3.1" fill="#c5c5c5"/><path d="M155.1 13.2 V26" stroke="#75beff" stroke-width="3"/><path d="M149.2 19.7 L155.1 25.6 L161 19.7" fill="none" stroke="#75beff" stroke-width="2.6"/><circle cx="155.1" cy="31.5" r="3.1" fill="#c5c5c5"/><path d="M202.9 14 V26.7" stroke="#75beff" stroke-width="3"/><path d="M197 19.7 L202.9 13.8 L208.8 19.7" fill="none" stroke="#75beff" stroke-width="2.6"/><circle cx="202.9" cy="31.5" r="3.1" fill="#c5c5c5"/><path d="M249.5 16.2 A8.4 8.4 0 1 1 243.3 22.8" fill="none" stroke="#89d185" stroke-width="3"/><path d="M241.9 15 V23.4 H250" fill="none" stroke="#89d185" stroke-width="3"/><rect x="289.8" y="15" width="18.2" height="18" fill="#f48771"/><path d="M296.5 15.5 V20.5 M301.8 15.5 V20.5" stroke="#333" stroke-width="1.8"/><path d="M293.6 20.2 H305.8 V22.3 L301.2 27 H297.8 L293.6 22.3Z" fill="#333"/><path d="M299.5 26 V31" stroke="#333" stroke-width="1.8"/></svg>
<div class="r" style="left:1366.00px;top:85.00px;width:255.00px;height:31.50px;background:#3c3c3c;"></div>
<div class="clip" style="left:1366px;top:85px;width:226px;height:32px"><div class="t" style="left:8.00px;top:-0.39px;line-height:39px;font-size:19.60px;color:#f0f0f0;">Attach to Server (lsp-sample)</div></div>
<svg class="abs" style="left:1601px;top:95px" width="12" height="11"><path d="M1 1H10L5.5 10Z" fill="#fff"/></svg>
<div class="clip" style="left:672px;top:1287px;width:1733px;height:486px"><div class="r" style="left:0.00px;top:0.00px;width:1733.00px;height:486.00px;background:#1e1e1e;"></div>
<div class="r" style="left:0.00px;top:0.00px;width:1733.00px;height:1.00px;background:#474747;"></div>
<div class="t" style="left:54.40px;top:11.92px;line-height:32px;font-size:16.10px;color:#969696;">PROBLEMS</div>
<div class="t" style="left:195.00px;top:11.92px;line-height:32px;font-size:16.10px;color:#969696;">OUTPUT</div>
<div class="t" style="left:316.00px;top:11.92px;line-height:32px;font-size:16.10px;color:#969696;">DEBUG CONSOLE</div>
<div class="t" style="left:509.00px;top:11.92px;line-height:32px;font-size:16.10px;color:#e7e7e7;">TERMINAL</div>
<div class="r" style="left:509.00px;top:49.50px;width:84.00px;height:1.50px;background:#e7e7e7;"></div>
<div class="t" style="left:30.70px;top:70.12px;line-height:37px;font-size:18.32px;color:#ccc;font-family:'Liberation Mono', monospace;-webkit-text-stroke:0.25px currentColor;"><span class="tw">Copyright (C) Microsoft Corporation. All rights reserved.</span></div>
<div class="t" style="left:30.70px;top:118.12px;line-height:37px;font-size:18.32px;color:#ccc;font-family:'Liberation Mono', monospace;-webkit-text-stroke:0.25px currentColor;"><span class="tw">Loading personal and system profiles took 839ms.</span></div>
<div class="t" style="left:30.70px;top:142.12px;line-height:37px;font-size:18.32px;color:#ccc;font-family:'Liberation Mono', monospace;-webkit-text-stroke:0.25px currentColor;"><span class="tyl">vscode-extension-samples\lsp-sample [</span><span class="tcy">master ≡</span><span class="tyl">]&gt; npm</span><span class="tw"> run compile</span></div>
<div class="t" style="left:30.70px;top:190.12px;line-height:37px;font-size:18.32px;color:#ccc;font-family:'Liberation Mono', monospace;-webkit-text-stroke:0.25px currentColor;"><span class="tw">&gt; lsp-sample@1.0.0 compile C:\Users\dirkb\Projects\mseng\VSCode\vscode-extension-samples\lsp-sample</span></div>
<div class="t" style="left:30.70px;top:214.12px;line-height:37px;font-size:18.32px;color:#ccc;font-family:'Liberation Mono', monospace;-webkit-text-stroke:0.25px currentColor;"><span class="tw">&gt; npm run compile:client &amp;&amp; npm run compile:server</span></div>
<div class="t" style="left:30.70px;top:286.12px;line-height:37px;font-size:18.32px;color:#ccc;font-family:'Liberation Mono', monospace;-webkit-text-stroke:0.25px currentColor;"><span class="tw">&gt; lsp-sample@1.0.0 compile:client C:\Users\dirkb\Projects\mseng\VSCode\vscode-extension-samples\lsp-sample</span></div>
<div class="t" style="left:30.70px;top:310.12px;line-height:37px;font-size:18.32px;color:#ccc;font-family:'Liberation Mono', monospace;-webkit-text-stroke:0.25px currentColor;"><span class="tw">&gt; tsc -p ./client/tsconfig.json</span></div>
<div class="t" style="left:30.70px;top:382.12px;line-height:37px;font-size:18.32px;color:#ccc;font-family:'Liberation Mono', monospace;-webkit-text-stroke:0.25px currentColor;"><span class="tw">&gt; lsp-sample@1.0.0 compile:server C:\Users\dirkb\Projects\mseng\VSCode\vscode-extension-samples\lsp-sample</span></div>
<div class="t" style="left:30.70px;top:406.12px;line-height:37px;font-size:18.32px;color:#ccc;font-family:'Liberation Mono', monospace;-webkit-text-stroke:0.25px currentColor;"><span class="tw">&gt; tsc -p ./server/tsconfig.json</span></div>
<div class="t" style="left:30.70px;top:454.12px;line-height:37px;font-size:18.32px;color:#ccc;font-family:'Liberation Mono', monospace;-webkit-text-stroke:0.25px currentColor;"><span class="tyl">vscode-extension-samples\lsp-sample [</span><span class="tcy">master ≡</span><span class="tyl">]&gt; </span></div>
<div class="r" style="left:557.8px;top:459.0px;width:11px;height:23px;border:1.5px solid #cccccc"></div>
<div class="r" style="left:1180.00px;top:13.00px;width:255.00px;height:32.00px;background:#3c3c3c;"></div>
<div class="t" style="left:1188.00px;top:11.54px;line-height:39px;font-size:19.50px;color:#f0f0f0;">1: powershell</div>
<svg class="abs" style="left:1415px;top:22px" width="12" height="11"><path d="M1 1H10L5.5 10Z" fill="#fff"/></svg>
<svg class="abs" style="left:1453px;top:9px" width="280" height="40"><path d="M18.75 11 V28 M10.25 19.5 H27.25" stroke="#c5c5c5" stroke-width="4.2"/><path d="M54.9 14 V27.1 H75 V14" fill="none" stroke="#c5c5c5" stroke-width="2"/><rect x="53.9" y="9.8" width="22.1" height="5" fill="#c5c5c5"/><rect x="63.7" y="14" width="3.2" height="14" fill="#c5c5c5"/><rect x="102.6" y="12.8" width="17.1" height="2.4" fill="#c5c5c5"/><path d="M107.8 13 V10.8 H114.5 V13" fill="none" stroke="#c5c5c5" stroke-width="1.6"/><path d="M104.3 15 H118 L117 28.4 Q116.8 29.7 115.5 29.7 H106.8 Q105.5 29.7 105.3 28.4Z" fill="#c5c5c5"/><path d="M108.1 17.5 V27 M111.2 17.5 V27 M114.3 17.5 V27" stroke="#1e1e1e" stroke-width="1.1"/><path d="M150.9 23.2 L159.85 14.2 L168.8 23.2" fill="none" stroke="#c5c5c5" stroke-width="2.4"/><rect x="197.3" y="10.8" width="19.7" height="16.3" fill="none" stroke="#c5c5c5" stroke-width="2"/><rect x="210.2" y="9.8" width="7.8" height="18.3" fill="#c5c5c5"/><path d="M248.3 13.3 L261.3 25.5 M261.3 13.3 L248.3 25.5" stroke="#c5c5c5" stroke-width="3"/></svg></div></body></html>
